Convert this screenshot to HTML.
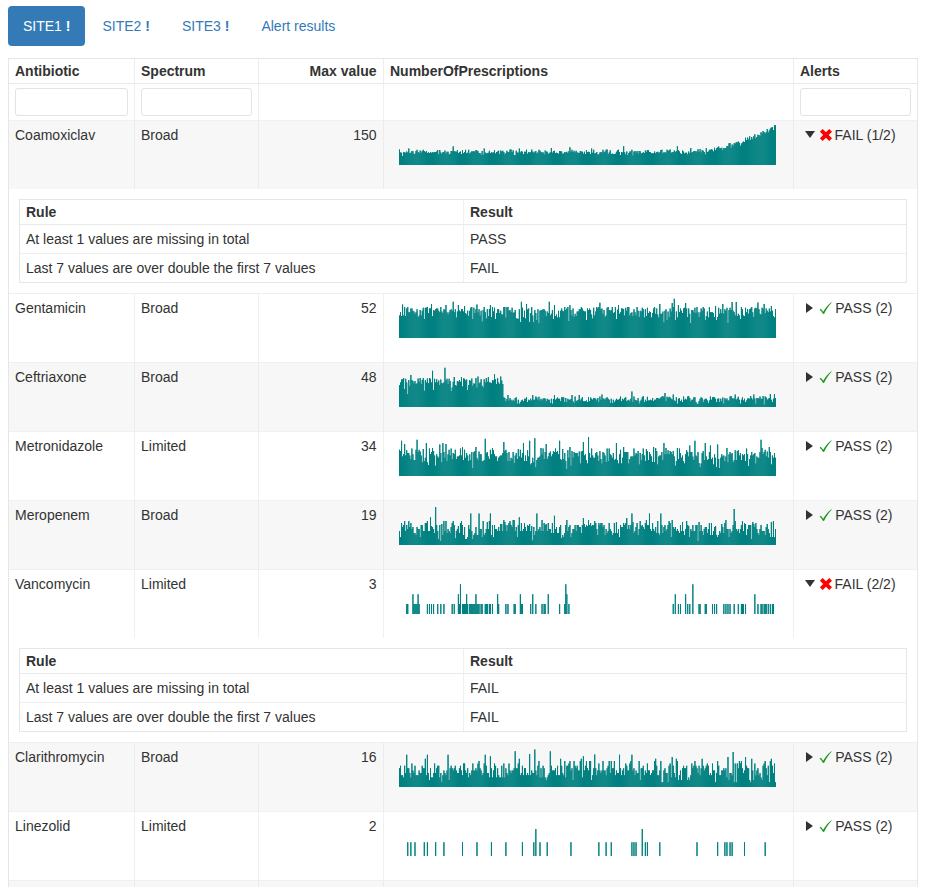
<!DOCTYPE html>
<html lang="en"><head><meta charset="utf-8"><title>mantis report</title>
<style>
*{box-sizing:border-box}
html,body{margin:0;padding:0;background:#fff}
body{width:925px;height:887px;overflow:hidden;position:relative;font-family:"Liberation Sans",Arial,Helvetica,sans-serif;font-size:14px;color:#333;line-height:16px}
ul.nav{list-style:none;margin:0;padding:0;position:absolute;left:8px;top:6px;display:flex}
ul.nav li{margin-right:2px}
ul.nav a{display:block;padding:10px 15px;line-height:20px;color:#337ab7;text-decoration:none;border-radius:4px;white-space:nowrap}
ul.nav li.active a{background:#337ab7;color:#fff}
ul.nav b{font-weight:bold}
.tbl{position:absolute;left:8px;top:58px;width:910px;border:1px solid #e6e6e6;border-bottom:0}
.tr{display:flex;position:relative}
.c{flex:0 0 auto;border-right:1px solid #efefef;padding:0 6px;overflow:hidden;white-space:nowrap;position:relative}
.c1{width:126px}.c2{width:124px}.c3{width:125px;text-align:right;padding-right:6.5px}.c4{width:410px}.c5{width:123px;border-right:0}
.hd .c{height:25px;padding-top:4px;font-weight:bold;border-bottom:1px solid #e9e9e9;border-right-color:#ededed}
.ft .c{height:36px;padding-top:4px}
.ft input{display:block;width:100%;height:28px;border:1px solid #e3e3e3;border-radius:3px;background:#fff;padding:0;margin:0}
.row .c{height:69px;border-top:1px solid #f0f0f0;padding-top:6px}
.row.s{background:#f7f7f7}
.row.s .c{border-right-color:#ebebeb;border-top-color:#f0f0f0}
.spark{position:absolute;left:14px;top:4px;display:block}
.exp{display:inline-block;width:0;height:0;vertical-align:top;margin:0}
.c5{padding-left:0}
.tri-d{position:absolute;left:11.4px;top:10px;width:0;height:0;border-left:5.04px solid transparent;border-right:5.04px solid transparent;border-top:7px solid rgba(0,0,0,.8)}
.tri-r{position:absolute;left:12.4px;top:8.8px;width:0;height:0;border-top:5.04px solid transparent;border-bottom:5.04px solid transparent;border-left:7px solid rgba(0,0,0,.8)}
.ic{position:absolute}.ic.x{left:25px;top:7px}.ic.k{left:25px;top:8px}
.lab{position:absolute;left:40.6px;top:6px}
.lab.p{left:41.2px}
.det{height:104px;padding:10px;background:#fff;border-top:0}
.in{border:1px solid #e6e6e6;width:888px}
.in .tr>div{flex:0 0 auto;padding:0 6px;white-space:nowrap}
.in .a{width:444px;border-right:1px solid #efefef}
.in .b{width:442px}
.in .h>div{height:25px;padding-top:4px;font-weight:bold;border-bottom:1px solid #e9e9e9}
.in .r>div{height:29px;padding-top:6px;border-bottom:1px solid #efefef}
.in .r.l>div{height:28px;border-bottom:0}
</style></head><body>
<ul class="nav"><li class="active"><a>SITE1 <b>!</b></a></li><li><a>SITE2 <b>!</b></a></li><li><a>SITE3 <b>!</b></a></li><li><a>Alert results</a></li></ul>
<div class="tbl">
<div class="tr hd"><div class="c c1">Antibiotic</div><div class="c c2">Spectrum</div><div class="c c3">Max value</div><div class="c c4">NumberOfPrescriptions</div><div class="c c5" style="padding-left:6px">Alerts</div></div>
<div class="tr ft"><div class="c c1"><input type="text"></div><div class="c c2"><input type="text"></div><div class="c c3"></div><div class="c c4"></div><div class="c c5" style="padding-left:6px"><input type="text"></div></div>
<div class="tr row s"><div class="c c1">Coamoxiclav</div><div class="c c2">Broad</div><div class="c c3">150</div><div class="c c4"><svg class="spark" width="380" height="41" viewBox="0 0 380 41" fill="#008080"><g><path d="M1.00 40V24.5h1V40zM4.10 40V30.9h1V40zM7.20 40V27.8h1V40zM10.30 40V23.4h1V40zM13.40 40V26.0h1V40zM16.49 40V28.7h1V40zM19.59 40V27.1h1V40zM22.69 40V27.5h1V40zM25.79 40V26.1h1V40zM28.89 40V28.0h1V40zM31.99 40V27.3h1V40zM35.09 40V27.6h1V40zM38.19 40V26.6h1V40zM41.29 40V25.1h1V40zM44.38 40V27.3h1V40zM47.48 40V28.6h1V40zM50.58 40V29.5h1V40zM53.68 40V26.0h1V40zM56.78 40V26.4h1V40zM59.88 40V28.2h1V40zM62.98 40V29.3h1V40zM66.08 40V27.1h1V40zM69.18 40V27.8h1V40zM72.27 40V27.6h1V40zM75.37 40V26.2h1V40zM78.47 40V25.5h1V40zM81.57 40V28.1h1V40zM84.67 40V29.7h1V40zM87.77 40V28.6h1V40zM90.87 40V25.8h1V40zM93.97 40V27.8h1V40zM97.07 40V28.4h1V40zM100.16 40V25.8h1V40zM103.26 40V26.4h1V40zM106.36 40V29.4h1V40zM109.46 40V27.0h1V40zM112.56 40V24.4h1V40zM115.66 40V29.9h1V40zM118.76 40V27.4h1V40zM121.86 40V27.4h1V40zM124.96 40V29.3h1V40zM128.05 40V24.7h1V40zM131.15 40V27.6h1V40zM134.25 40V26.5h1V40zM137.35 40V25.9h1V40zM140.45 40V24.8h1V40zM143.55 40V27.7h1V40zM146.65 40V25.6h1V40zM149.75 40V28.9h1V40zM152.85 40V23.0h1V40zM155.95 40V25.7h1V40zM159.04 40V28.3h1V40zM162.14 40V26.3h1V40zM165.24 40V28.5h1V40zM168.34 40V26.8h1V40zM171.44 40V22.3h1V40zM174.54 40V26.9h1V40zM177.64 40V25.7h1V40zM180.74 40V28.0h1V40zM183.84 40V26.7h1V40zM186.93 40V29.1h1V40zM190.03 40V26.7h1V40zM193.13 40V23.4h1V40zM196.23 40V28.6h1V40zM199.33 40V29.5h1V40zM202.43 40V27.1h1V40zM205.53 40V27.3h1V40zM208.63 40V24.5h1V40zM211.73 40V25.3h1V40zM214.82 40V28.9h1V40zM217.92 40V26.8h1V40zM221.02 40V27.0h1V40zM224.12 40V27.5h1V40zM227.22 40V29.6h1V40zM230.32 40V28.0h1V40zM233.42 40V24.7h1V40zM236.52 40V26.0h1V40zM239.62 40V28.6h1V40zM242.71 40V28.5h1V40zM245.81 40V28.0h1V40zM248.91 40V25.1h1V40zM252.01 40V27.3h1V40zM255.11 40V28.2h1V40zM258.21 40V26.9h1V40zM261.31 40V27.3h1V40zM264.41 40V28.2h1V40zM267.51 40V27.4h1V40zM270.60 40V25.2h1V40zM273.70 40V27.3h1V40zM276.80 40V27.2h1V40zM279.90 40V25.3h1V40zM283.00 40V29.3h1V40zM286.10 40V28.4h1V40zM289.20 40V29.5h1V40zM292.30 40V23.0h1V40zM295.40 40V26.0h1V40zM298.49 40V26.5h1V40zM301.59 40V23.9h1V40zM304.69 40V25.7h1V40zM307.79 40V23.2h1V40zM310.89 40V24.8h1V40zM313.99 40V24.8h1V40zM317.09 40V25.2h1V40zM320.19 40V21.5h1V40zM323.29 40V22.8h1V40zM326.38 40V23.2h1V40zM329.48 40V21.3h1V40zM332.58 40V22.7h1V40zM335.68 40V18.2h1V40zM338.78 40V17.6h1V40zM341.88 40V20.7h1V40zM344.98 40V16.6h1V40zM348.08 40V15.0h1V40zM351.18 40V11.2h1V40zM354.27 40V14.3h1V40zM357.37 40V13.5h1V40zM360.47 40V10.0h1V40zM363.57 40V8.3h1V40zM366.67 40V8.6h1V40zM369.77 40V7.5h1V40zM372.87 40V2.5h1V40zM375.97 40V0.3h1V40z"/><path d="M2.03 40V27.4h1V40zM5.13 40V27.0h1V40zM8.23 40V26.6h1V40zM11.33 40V28.3h1V40zM14.43 40V26.2h1V40zM17.53 40V25.9h1V40zM20.63 40V28.0h1V40zM23.73 40V26.0h1V40zM26.82 40V26.9h1V40zM29.92 40V27.3h1V40zM33.02 40V27.7h1V40zM36.12 40V26.9h1V40zM39.22 40V25.0h1V40zM42.32 40V27.4h1V40zM45.42 40V26.9h1V40zM48.52 40V26.7h1V40zM51.62 40V28.7h1V40zM54.71 40V21.2h1V40zM57.81 40V26.8h1V40zM60.91 40V27.2h1V40zM64.01 40V25.1h1V40zM67.11 40V24.7h1V40zM70.21 40V24.7h1V40zM73.31 40V26.3h1V40zM76.41 40V26.5h1V40zM79.51 40V26.2h1V40zM82.60 40V29.8h1V40zM85.70 40V23.4h1V40zM88.80 40V28.0h1V40zM91.90 40V28.3h1V40zM95.00 40V27.4h1V40zM98.10 40V26.9h1V40zM101.20 40V28.9h1V40zM104.30 40V25.7h1V40zM107.40 40V28.0h1V40zM110.49 40V27.1h1V40zM113.59 40V27.1h1V40zM116.69 40V30.0h1V40zM119.79 40V27.7h1V40zM122.89 40V26.0h1V40zM125.99 40V26.7h1V40zM129.09 40V28.7h1V40zM132.19 40V27.2h1V40zM135.29 40V27.7h1V40zM138.38 40V28.5h1V40zM141.48 40V25.8h1V40zM144.58 40V27.2h1V40zM147.68 40V26.5h1V40zM150.78 40V28.1h1V40zM153.88 40V27.7h1V40zM156.98 40V28.0h1V40zM160.08 40V28.7h1V40zM163.18 40V26.5h1V40zM166.27 40V27.1h1V40zM169.37 40V28.0h1V40zM172.47 40V26.8h1V40zM175.57 40V25.7h1V40zM178.67 40V27.6h1V40zM181.77 40V26.0h1V40zM184.87 40V28.7h1V40zM187.97 40V24.9h1V40zM191.07 40V27.2h1V40zM194.16 40V27.7h1V40zM197.26 40V28.0h1V40zM200.36 40V29.5h1V40zM203.46 40V27.6h1V40zM206.56 40V26.5h1V40zM209.66 40V29.3h1V40zM212.76 40V29.0h1V40zM215.86 40V29.0h1V40zM218.96 40V25.2h1V40zM222.05 40V29.9h1V40zM225.15 40V21.2h1V40zM228.25 40V26.4h1V40zM231.35 40V26.6h1V40zM234.45 40V30.5h1V40zM237.55 40V27.5h1V40zM240.65 40V26.1h1V40zM243.75 40V28.0h1V40zM246.85 40V25.5h1V40zM249.95 40V25.3h1V40zM253.04 40V28.4h1V40zM256.14 40V26.5h1V40zM259.24 40V26.7h1V40zM262.34 40V24.9h1V40zM265.44 40V27.3h1V40zM268.54 40V24.8h1V40zM271.64 40V24.4h1V40zM274.74 40V27.0h1V40zM277.84 40V26.1h1V40zM280.93 40V26.4h1V40zM284.03 40V25.4h1V40zM287.13 40V27.8h1V40zM290.23 40V26.6h1V40zM293.33 40V27.5h1V40zM296.43 40V26.1h1V40zM299.53 40V24.2h1V40zM302.63 40V27.5h1V40zM305.73 40V26.9h1V40zM308.82 40V27.0h1V40zM311.92 40V24.8h1V40zM315.02 40V26.5h1V40zM318.12 40V23.3h1V40zM321.22 40V23.3h1V40zM324.32 40V24.9h1V40zM327.42 40V23.1h1V40zM330.52 40V18.3h1V40zM333.62 40V19.5h1V40zM336.71 40V18.5h1V40zM339.81 40V16.6h1V40zM342.91 40V18.4h1V40zM346.01 40V17.0h1V40zM349.11 40V12.5h1V40zM352.21 40V14.9h1V40zM355.31 40V11.3h1V40zM358.41 40V11.9h1V40zM361.51 40V11.3h1V40zM364.60 40V6.0h1V40zM367.70 40V7.2h1V40zM370.80 40V5.6h1V40zM373.90 40V2.2h1V40zM377.00 40V0.3h1V40z"/><path d="M3.07 40V27.7h1V40zM6.16 40V27.5h1V40zM9.26 40V27.4h1V40zM12.36 40V27.7h1V40zM15.46 40V28.9h1V40zM18.56 40V24.7h1V40zM21.66 40V25.4h1V40zM24.76 40V24.8h1V40zM27.86 40V26.0h1V40zM30.96 40V27.9h1V40zM34.05 40V27.3h1V40zM37.15 40V26.9h1V40zM40.25 40V29.3h1V40zM43.35 40V28.8h1V40zM46.45 40V25.5h1V40zM49.55 40V26.8h1V40zM52.65 40V26.1h1V40zM55.75 40V26.2h1V40zM58.85 40V25.3h1V40zM61.95 40V26.5h1V40zM65.04 40V28.2h1V40zM68.14 40V28.2h1V40zM71.24 40V28.6h1V40zM74.34 40V26.4h1V40zM77.44 40V25.1h1V40zM80.54 40V28.0h1V40zM83.64 40V26.0h1V40zM86.74 40V27.4h1V40zM89.84 40V27.7h1V40zM92.93 40V27.2h1V40zM96.03 40V25.1h1V40zM99.13 40V26.6h1V40zM102.23 40V25.4h1V40zM105.33 40V26.9h1V40zM108.43 40V25.8h1V40zM111.53 40V24.4h1V40zM114.63 40V25.2h1V40zM117.73 40V25.8h1V40zM120.82 40V23.4h1V40zM123.92 40V26.8h1V40zM127.02 40V26.7h1V40zM130.12 40V27.0h1V40zM133.22 40V24.6h1V40zM136.32 40V26.8h1V40zM139.42 40V27.4h1V40zM142.52 40V27.1h1V40zM145.62 40V29.3h1V40zM148.71 40V26.8h1V40zM151.81 40V27.3h1V40zM154.91 40V26.3h1V40zM158.01 40V27.8h1V40zM161.11 40V25.9h1V40zM164.21 40V28.7h1V40zM167.31 40V27.6h1V40zM170.41 40V26.3h1V40zM173.51 40V24.7h1V40zM176.60 40V27.6h1V40zM179.70 40V27.7h1V40zM182.80 40V26.6h1V40zM185.90 40V26.8h1V40zM189.00 40V27.2h1V40zM192.10 40V29.3h1V40zM195.20 40V24.8h1V40zM198.30 40V27.1h1V40zM201.40 40V27.6h1V40zM204.49 40V24.8h1V40zM207.59 40V24.7h1V40zM210.69 40V27.6h1V40zM213.79 40V28.4h1V40zM216.89 40V28.7h1V40zM219.99 40V24.8h1V40zM223.09 40V27.1h1V40zM226.19 40V27.2h1V40zM229.29 40V30.0h1V40zM232.38 40V26.5h1V40zM235.48 40V26.5h1V40zM238.58 40V26.1h1V40zM241.68 40V26.2h1V40zM244.78 40V27.3h1V40zM247.88 40V26.8h1V40zM250.98 40V26.9h1V40zM254.08 40V28.2h1V40zM257.18 40V28.3h1V40zM260.27 40V27.7h1V40zM263.37 40V24.7h1V40zM266.47 40V27.6h1V40zM269.57 40V26.0h1V40zM272.67 40V27.7h1V40zM275.77 40V25.5h1V40zM278.87 40V21.2h1V40zM281.97 40V28.2h1V40zM285.07 40V26.4h1V40zM288.16 40V27.7h1V40zM291.26 40V28.1h1V40zM294.36 40V27.0h1V40zM297.46 40V26.6h1V40zM300.56 40V26.7h1V40zM303.66 40V25.0h1V40zM306.76 40V29.5h1V40zM309.86 40V26.6h1V40zM312.96 40V24.3h1V40zM316.05 40V22.8h1V40zM319.15 40V22.6h1V40zM322.25 40V23.2h1V40zM325.35 40V23.1h1V40zM328.45 40V20.9h1V40zM331.55 40V18.1h1V40zM334.65 40V20.8h1V40zM337.75 40V17.0h1V40zM340.85 40V17.8h1V40zM343.95 40V17.6h1V40zM347.04 40V12.8h1V40zM350.14 40V14.5h1V40zM353.24 40V11.9h1V40zM356.34 40V9.2h1V40zM359.44 40V9.8h1V40zM362.54 40V7.2h1V40zM365.64 40V7.0h1V40zM368.74 40V4.0h1V40zM371.84 40V3.6h1V40zM374.93 40V5.1h1V40z"/></g><g><path d="M1.00 40V24.5h1V40zM4.10 40V30.9h1V40zM7.20 40V27.8h1V40zM10.30 40V23.4h1V40zM13.40 40V26.0h1V40zM16.49 40V28.7h1V40zM19.59 40V27.1h1V40zM22.69 40V27.5h1V40zM25.79 40V26.1h1V40zM28.89 40V28.0h1V40zM31.99 40V27.3h1V40zM35.09 40V27.6h1V40zM38.19 40V26.6h1V40zM41.29 40V25.1h1V40zM44.38 40V27.3h1V40zM47.48 40V28.6h1V40zM50.58 40V29.5h1V40zM53.68 40V26.0h1V40zM56.78 40V26.4h1V40zM59.88 40V28.2h1V40zM62.98 40V29.3h1V40zM66.08 40V27.1h1V40zM69.18 40V27.8h1V40zM72.27 40V27.6h1V40zM75.37 40V26.2h1V40zM78.47 40V25.5h1V40zM81.57 40V28.1h1V40zM84.67 40V29.7h1V40zM87.77 40V28.6h1V40zM90.87 40V25.8h1V40zM93.97 40V27.8h1V40zM97.07 40V28.4h1V40zM100.16 40V25.8h1V40zM103.26 40V26.4h1V40zM106.36 40V29.4h1V40zM109.46 40V27.0h1V40zM112.56 40V24.4h1V40zM115.66 40V29.9h1V40zM118.76 40V27.4h1V40zM121.86 40V27.4h1V40zM124.96 40V29.3h1V40zM128.05 40V24.7h1V40zM131.15 40V27.6h1V40zM134.25 40V26.5h1V40zM137.35 40V25.9h1V40zM140.45 40V24.8h1V40zM143.55 40V27.7h1V40zM146.65 40V25.6h1V40zM149.75 40V28.9h1V40zM152.85 40V23.0h1V40zM155.95 40V25.7h1V40zM159.04 40V28.3h1V40zM162.14 40V26.3h1V40zM165.24 40V28.5h1V40zM168.34 40V26.8h1V40zM171.44 40V22.3h1V40zM174.54 40V26.9h1V40zM177.64 40V25.7h1V40zM180.74 40V28.0h1V40zM183.84 40V26.7h1V40zM186.93 40V29.1h1V40zM190.03 40V26.7h1V40zM193.13 40V23.4h1V40zM196.23 40V28.6h1V40zM199.33 40V29.5h1V40zM202.43 40V27.1h1V40zM205.53 40V27.3h1V40zM208.63 40V24.5h1V40zM211.73 40V25.3h1V40zM214.82 40V28.9h1V40zM217.92 40V26.8h1V40zM221.02 40V27.0h1V40zM224.12 40V27.5h1V40zM227.22 40V29.6h1V40zM230.32 40V28.0h1V40zM233.42 40V24.7h1V40zM236.52 40V26.0h1V40zM239.62 40V28.6h1V40zM242.71 40V28.5h1V40zM245.81 40V28.0h1V40zM248.91 40V25.1h1V40zM252.01 40V27.3h1V40zM255.11 40V28.2h1V40zM258.21 40V26.9h1V40zM261.31 40V27.3h1V40zM264.41 40V28.2h1V40zM267.51 40V27.4h1V40zM270.60 40V25.2h1V40zM273.70 40V27.3h1V40zM276.80 40V27.2h1V40zM279.90 40V25.3h1V40zM283.00 40V29.3h1V40zM286.10 40V28.4h1V40zM289.20 40V29.5h1V40zM292.30 40V23.0h1V40zM295.40 40V26.0h1V40zM298.49 40V26.5h1V40zM301.59 40V23.9h1V40zM304.69 40V25.7h1V40zM307.79 40V23.2h1V40zM310.89 40V24.8h1V40zM313.99 40V24.8h1V40zM317.09 40V25.2h1V40zM320.19 40V21.5h1V40zM323.29 40V22.8h1V40zM326.38 40V23.2h1V40zM329.48 40V21.3h1V40zM332.58 40V22.7h1V40zM335.68 40V18.2h1V40zM338.78 40V17.6h1V40zM341.88 40V20.7h1V40zM344.98 40V16.6h1V40zM348.08 40V15.0h1V40zM351.18 40V11.2h1V40zM354.27 40V14.3h1V40zM357.37 40V13.5h1V40zM360.47 40V10.0h1V40zM363.57 40V8.3h1V40zM366.67 40V8.6h1V40zM369.77 40V7.5h1V40zM372.87 40V2.5h1V40zM375.97 40V0.3h1V40z"/><path d="M2.03 40V27.4h1V40zM5.13 40V27.0h1V40zM8.23 40V26.6h1V40zM11.33 40V28.3h1V40zM14.43 40V26.2h1V40zM17.53 40V25.9h1V40zM20.63 40V28.0h1V40zM23.73 40V26.0h1V40zM26.82 40V26.9h1V40zM29.92 40V27.3h1V40zM33.02 40V27.7h1V40zM36.12 40V26.9h1V40zM39.22 40V25.0h1V40zM42.32 40V27.4h1V40zM45.42 40V26.9h1V40zM48.52 40V26.7h1V40zM51.62 40V28.7h1V40zM54.71 40V21.2h1V40zM57.81 40V26.8h1V40zM60.91 40V27.2h1V40zM64.01 40V25.1h1V40zM67.11 40V24.7h1V40zM70.21 40V24.7h1V40zM73.31 40V26.3h1V40zM76.41 40V26.5h1V40zM79.51 40V26.2h1V40zM82.60 40V29.8h1V40zM85.70 40V23.4h1V40zM88.80 40V28.0h1V40zM91.90 40V28.3h1V40zM95.00 40V27.4h1V40zM98.10 40V26.9h1V40zM101.20 40V28.9h1V40zM104.30 40V25.7h1V40zM107.40 40V28.0h1V40zM110.49 40V27.1h1V40zM113.59 40V27.1h1V40zM116.69 40V30.0h1V40zM119.79 40V27.7h1V40zM122.89 40V26.0h1V40zM125.99 40V26.7h1V40zM129.09 40V28.7h1V40zM132.19 40V27.2h1V40zM135.29 40V27.7h1V40zM138.38 40V28.5h1V40zM141.48 40V25.8h1V40zM144.58 40V27.2h1V40zM147.68 40V26.5h1V40zM150.78 40V28.1h1V40zM153.88 40V27.7h1V40zM156.98 40V28.0h1V40zM160.08 40V28.7h1V40zM163.18 40V26.5h1V40zM166.27 40V27.1h1V40zM169.37 40V28.0h1V40zM172.47 40V26.8h1V40zM175.57 40V25.7h1V40zM178.67 40V27.6h1V40zM181.77 40V26.0h1V40zM184.87 40V28.7h1V40zM187.97 40V24.9h1V40zM191.07 40V27.2h1V40zM194.16 40V27.7h1V40zM197.26 40V28.0h1V40zM200.36 40V29.5h1V40zM203.46 40V27.6h1V40zM206.56 40V26.5h1V40zM209.66 40V29.3h1V40zM212.76 40V29.0h1V40zM215.86 40V29.0h1V40zM218.96 40V25.2h1V40zM222.05 40V29.9h1V40zM225.15 40V21.2h1V40zM228.25 40V26.4h1V40zM231.35 40V26.6h1V40zM234.45 40V30.5h1V40zM237.55 40V27.5h1V40zM240.65 40V26.1h1V40zM243.75 40V28.0h1V40zM246.85 40V25.5h1V40zM249.95 40V25.3h1V40zM253.04 40V28.4h1V40zM256.14 40V26.5h1V40zM259.24 40V26.7h1V40zM262.34 40V24.9h1V40zM265.44 40V27.3h1V40zM268.54 40V24.8h1V40zM271.64 40V24.4h1V40zM274.74 40V27.0h1V40zM277.84 40V26.1h1V40zM280.93 40V26.4h1V40zM284.03 40V25.4h1V40zM287.13 40V27.8h1V40zM290.23 40V26.6h1V40zM293.33 40V27.5h1V40zM296.43 40V26.1h1V40zM299.53 40V24.2h1V40zM302.63 40V27.5h1V40zM305.73 40V26.9h1V40zM308.82 40V27.0h1V40zM311.92 40V24.8h1V40zM315.02 40V26.5h1V40zM318.12 40V23.3h1V40zM321.22 40V23.3h1V40zM324.32 40V24.9h1V40zM327.42 40V23.1h1V40zM330.52 40V18.3h1V40zM333.62 40V19.5h1V40zM336.71 40V18.5h1V40zM339.81 40V16.6h1V40zM342.91 40V18.4h1V40zM346.01 40V17.0h1V40zM349.11 40V12.5h1V40zM352.21 40V14.9h1V40zM355.31 40V11.3h1V40zM358.41 40V11.9h1V40zM361.51 40V11.3h1V40zM364.60 40V6.0h1V40zM367.70 40V7.2h1V40zM370.80 40V5.6h1V40zM373.90 40V2.2h1V40zM377.00 40V0.3h1V40z"/><path d="M3.07 40V27.7h1V40zM6.16 40V27.5h1V40zM9.26 40V27.4h1V40zM12.36 40V27.7h1V40zM15.46 40V28.9h1V40zM18.56 40V24.7h1V40zM21.66 40V25.4h1V40zM24.76 40V24.8h1V40zM27.86 40V26.0h1V40zM30.96 40V27.9h1V40zM34.05 40V27.3h1V40zM37.15 40V26.9h1V40zM40.25 40V29.3h1V40zM43.35 40V28.8h1V40zM46.45 40V25.5h1V40zM49.55 40V26.8h1V40zM52.65 40V26.1h1V40zM55.75 40V26.2h1V40zM58.85 40V25.3h1V40zM61.95 40V26.5h1V40zM65.04 40V28.2h1V40zM68.14 40V28.2h1V40zM71.24 40V28.6h1V40zM74.34 40V26.4h1V40zM77.44 40V25.1h1V40zM80.54 40V28.0h1V40zM83.64 40V26.0h1V40zM86.74 40V27.4h1V40zM89.84 40V27.7h1V40zM92.93 40V27.2h1V40zM96.03 40V25.1h1V40zM99.13 40V26.6h1V40zM102.23 40V25.4h1V40zM105.33 40V26.9h1V40zM108.43 40V25.8h1V40zM111.53 40V24.4h1V40zM114.63 40V25.2h1V40zM117.73 40V25.8h1V40zM120.82 40V23.4h1V40zM123.92 40V26.8h1V40zM127.02 40V26.7h1V40zM130.12 40V27.0h1V40zM133.22 40V24.6h1V40zM136.32 40V26.8h1V40zM139.42 40V27.4h1V40zM142.52 40V27.1h1V40zM145.62 40V29.3h1V40zM148.71 40V26.8h1V40zM151.81 40V27.3h1V40zM154.91 40V26.3h1V40zM158.01 40V27.8h1V40zM161.11 40V25.9h1V40zM164.21 40V28.7h1V40zM167.31 40V27.6h1V40zM170.41 40V26.3h1V40zM173.51 40V24.7h1V40zM176.60 40V27.6h1V40zM179.70 40V27.7h1V40zM182.80 40V26.6h1V40zM185.90 40V26.8h1V40zM189.00 40V27.2h1V40zM192.10 40V29.3h1V40zM195.20 40V24.8h1V40zM198.30 40V27.1h1V40zM201.40 40V27.6h1V40zM204.49 40V24.8h1V40zM207.59 40V24.7h1V40zM210.69 40V27.6h1V40zM213.79 40V28.4h1V40zM216.89 40V28.7h1V40zM219.99 40V24.8h1V40zM223.09 40V27.1h1V40zM226.19 40V27.2h1V40zM229.29 40V30.0h1V40zM232.38 40V26.5h1V40zM235.48 40V26.5h1V40zM238.58 40V26.1h1V40zM241.68 40V26.2h1V40zM244.78 40V27.3h1V40zM247.88 40V26.8h1V40zM250.98 40V26.9h1V40zM254.08 40V28.2h1V40zM257.18 40V28.3h1V40zM260.27 40V27.7h1V40zM263.37 40V24.7h1V40zM266.47 40V27.6h1V40zM269.57 40V26.0h1V40zM272.67 40V27.7h1V40zM275.77 40V25.5h1V40zM278.87 40V21.2h1V40zM281.97 40V28.2h1V40zM285.07 40V26.4h1V40zM288.16 40V27.7h1V40zM291.26 40V28.1h1V40zM294.36 40V27.0h1V40zM297.46 40V26.6h1V40zM300.56 40V26.7h1V40zM303.66 40V25.0h1V40zM306.76 40V29.5h1V40zM309.86 40V26.6h1V40zM312.96 40V24.3h1V40zM316.05 40V22.8h1V40zM319.15 40V22.6h1V40zM322.25 40V23.2h1V40zM325.35 40V23.1h1V40zM328.45 40V20.9h1V40zM331.55 40V18.1h1V40zM334.65 40V20.8h1V40zM337.75 40V17.0h1V40zM340.85 40V17.8h1V40zM343.95 40V17.6h1V40zM347.04 40V12.8h1V40zM350.14 40V14.5h1V40zM353.24 40V11.9h1V40zM356.34 40V9.2h1V40zM359.44 40V9.8h1V40zM362.54 40V7.2h1V40zM365.64 40V7.0h1V40zM368.74 40V4.0h1V40zM371.84 40V3.6h1V40zM374.93 40V5.1h1V40z"/></g></svg></div><div class="c c5"><span class="tri-d"></span><svg class="ic x" width="14" height="14" viewBox="0 0 14 14"><path fill="#f00" transform="translate(.45 .47)" d="M.45 3.2 3.2 .45 6.5 3.75 9.8 .45 12.55 3.2 9.25 6.5 12.55 9.8 9.8 12.55 6.5 9.25 3.2 12.55 .45 9.8 3.75 6.5z"/></svg><span class="lab">FAIL (1/2)</span></div></div>
<div class="det"><div class="in"><div class="tr h"><div class="a">Rule</div><div class="b">Result</div></div><div class="tr r"><div class="a">At least 1 values are missing in total</div><div class="b">PASS</div></div><div class="tr r l"><div class="a">Last 7 values are over double the first 7 values</div><div class="b">FAIL</div></div></div></div>
<div class="tr row"><div class="c c1">Gentamicin</div><div class="c c2">Broad</div><div class="c c3">52</div><div class="c c4"><svg class="spark" width="380" height="41" viewBox="0 0 380 41" fill="#008080"><g><path d="M1.00 40V17.4h1V40zM4.10 40V6.5h1V40zM7.20 40V18.1h1V40zM10.30 40V14.3h1V40zM13.40 40V10.6h1V40zM16.49 40V15.8h1V40zM19.59 40V18.9h1V40zM22.69 40V17.4h1V40zM25.79 40V21.0h1V40zM28.89 40V9.0h1V40zM31.99 40V10.6h1V40zM35.09 40V12.1h1V40zM38.19 40V10.5h1V40zM41.29 40V14.3h1V40zM44.38 40V15.1h1V40zM47.48 40V7.0h1V40zM50.58 40V14.3h1V40zM53.68 40V12.8h1V40zM56.78 40V11.3h1V40zM59.88 40V7.0h1V40zM62.98 40V11.3h1V40zM66.08 40V8.0h1V40zM69.18 40V12.8h1V40zM72.27 40V9.8h1V40zM75.37 40V9.8h1V40zM78.47 40V6.5h1V40zM81.57 40V17.4h1V40zM84.67 40V12.1h1V40zM87.77 40V20.4h1V40zM90.87 40V11.0h1V40zM93.97 40V9.0h1V40zM97.07 40V21.1h1V40zM100.16 40V11.3h1V40zM103.26 40V16.6h1V40zM106.36 40V9.1h1V40zM109.46 40V9.0h1V40zM112.56 40V14.3h1V40zM115.66 40V14.3h1V40zM118.76 40V20.4h1V40zM121.86 40V24.0h1V40zM124.96 40V18.9h1V40zM128.05 40V6.0h1V40zM131.15 40V24.0h1V40zM134.25 40V17.4h1V40zM137.35 40V15.1h1V40zM140.45 40V25.0h1V40zM143.55 40V12.1h1V40zM146.65 40V12.8h1V40zM149.75 40V15.1h1V40zM152.85 40V15.8h1V40zM155.95 40V7.0h1V40zM159.04 40V19.6h1V40zM162.14 40V12.8h1V40zM165.24 40V13.6h1V40zM168.34 40V10.5h1V40zM171.44 40V7.3h1V40zM174.54 40V10.6h1V40zM177.64 40V18.1h1V40zM180.74 40V11.3h1V40zM183.84 40V10.5h1V40zM186.93 40V13.6h1V40zM190.03 40V12.1h1V40zM193.13 40V16.6h1V40zM196.23 40V17.4h1V40zM199.33 40V10.5h1V40zM202.43 40V11.3h1V40zM205.53 40V12.1h1V40zM208.63 40V9.8h1V40zM211.73 40V12.8h1V40zM214.82 40V15.1h1V40zM217.92 40V21.1h1V40zM221.02 40V15.8h1V40zM224.12 40V10.6h1V40zM227.22 40V9.8h1V40zM230.32 40V9.1h1V40zM233.42 40V14.3h1V40zM236.52 40V14.3h1V40zM239.62 40V12.8h1V40zM242.71 40V13.6h1V40zM245.81 40V19.6h1V40zM248.91 40V9.8h1V40zM252.01 40V14.3h1V40zM255.11 40V10.6h1V40zM258.21 40V10.6h1V40zM261.31 40V6.0h1V40zM264.41 40V13.6h1V40zM267.51 40V11.3h1V40zM270.60 40V18.9h1V40zM273.70 40V5.0h1V40zM276.80 40V21.9h1V40zM279.90 40V7.0h1V40zM283.00 40V12.8h1V40zM286.10 40V9.8h1V40zM289.20 40V18.9h1V40zM292.30 40V25.0h1V40zM295.40 40V14.3h1V40zM298.49 40V9.0h1V40zM301.59 40V14.3h1V40zM304.69 40V9.1h1V40zM307.79 40V18.1h1V40zM310.89 40V9.0h1V40zM313.99 40V14.3h1V40zM317.09 40V8.0h1V40zM320.19 40V9.8h1V40zM323.29 40V15.1h1V40zM326.38 40V11.3h1V40zM329.48 40V25.0h1V40zM332.58 40V12.1h1V40zM335.68 40V14.3h1V40zM338.78 40V18.1h1V40zM341.88 40V21.1h1V40zM344.98 40V17.4h1V40zM348.08 40V14.3h1V40zM351.18 40V11.3h1V40zM354.27 40V14.3h1V40zM357.37 40V9.8h1V40zM360.47 40V11.3h1V40zM363.57 40V9.8h1V40zM366.67 40V15.1h1V40zM369.77 40V14.3h1V40zM372.87 40V8.0h1V40zM375.97 40V19.6h1V40z"/><path d="M2.03 40V14.3h1V40zM5.13 40V17.4h1V40zM8.23 40V10.6h1V40zM11.33 40V14.3h1V40zM14.43 40V12.8h1V40zM17.53 40V14.3h1V40zM20.63 40V17.4h1V40zM23.73 40V12.8h1V40zM26.82 40V9.8h1V40zM29.92 40V15.1h1V40zM33.02 40V6.0h1V40zM36.12 40V12.8h1V40zM39.22 40V10.6h1V40zM42.32 40V9.1h1V40zM45.42 40V11.3h1V40zM48.52 40V14.3h1V40zM51.62 40V12.1h1V40zM54.71 40V3.7h1V40zM57.81 40V19.6h1V40zM60.91 40V12.5h1V40zM64.01 40V11.3h1V40zM67.11 40V15.1h1V40zM70.21 40V18.1h1V40zM73.31 40V9.1h1V40zM76.41 40V15.1h1V40zM79.51 40V14.3h1V40zM82.60 40V12.8h1V40zM85.70 40V9.1h1V40zM88.80 40V11.3h1V40zM91.90 40V7.0h1V40zM95.00 40V13.6h1V40zM98.10 40V15.1h1V40zM101.20 40V15.1h1V40zM104.30 40V16.6h1V40zM107.40 40V19.6h1V40zM110.49 40V12.8h1V40zM113.59 40V9.8h1V40zM116.69 40V12.1h1V40zM119.79 40V21.1h1V40zM122.89 40V3.7h1V40zM125.99 40V12.8h1V40zM129.09 40V11.5h1V40zM132.19 40V15.1h1V40zM135.29 40V24.2h1V40zM138.38 40V21.9h1V40zM141.48 40V12.8h1V40zM144.58 40V11.3h1V40zM147.68 40V18.1h1V40zM150.78 40V3.7h1V40zM153.88 40V12.1h1V40zM156.98 40V18.1h1V40zM160.08 40V12.8h1V40zM163.18 40V10.5h1V40zM166.27 40V9.0h1V40zM169.37 40V9.1h1V40zM172.47 40V12.1h1V40zM175.57 40V18.9h1V40zM178.67 40V13.6h1V40zM181.77 40V11.3h1V40zM184.87 40V12.8h1V40zM187.97 40V21.9h1V40zM191.07 40V10.6h1V40zM194.16 40V20.4h1V40zM197.26 40V13.6h1V40zM200.36 40V9.0h1V40zM203.46 40V10.6h1V40zM206.56 40V18.9h1V40zM209.66 40V9.0h1V40zM212.76 40V12.1h1V40zM215.86 40V14.3h1V40zM218.96 40V11.8h1V40zM222.05 40V14.3h1V40zM225.15 40V11.3h1V40zM228.25 40V12.8h1V40zM231.35 40V17.4h1V40zM234.45 40V18.1h1V40zM237.55 40V17.4h1V40zM240.65 40V18.9h1V40zM243.75 40V9.8h1V40zM246.85 40V11.3h1V40zM249.95 40V15.1h1V40zM253.04 40V19.6h1V40zM256.14 40V9.1h1V40zM259.24 40V16.6h1V40zM262.34 40V15.8h1V40zM265.44 40V24.2h1V40zM268.54 40V21.9h1V40zM271.64 40V10.5h1V40zM274.74 40V9.0h1V40zM277.84 40V13.6h1V40zM280.93 40V14.3h1V40zM284.03 40V15.1h1V40zM287.13 40V5.0h1V40zM290.23 40V10.6h1V40zM293.33 40V12.1h1V40zM296.43 40V9.8h1V40zM299.53 40V14.3h1V40zM302.63 40V10.6h1V40zM305.73 40V10.5h1V40zM308.82 40V13.6h1V40zM311.92 40V14.3h1V40zM315.02 40V15.1h1V40zM318.12 40V22.0h1V40zM321.22 40V15.8h1V40zM324.32 40V6.0h1V40zM327.42 40V12.8h1V40zM330.52 40V12.1h1V40zM333.62 40V4.0h1V40zM336.71 40V17.4h1V40zM339.81 40V15.8h1V40zM342.91 40V9.1h1V40zM346.01 40V18.1h1V40zM349.11 40V11.3h1V40zM352.21 40V10.5h1V40zM355.31 40V18.9h1V40zM358.41 40V10.5h1V40zM361.51 40V15.8h1V40zM364.60 40V10.8h1V40zM367.70 40V10.6h1V40zM370.80 40V10.6h1V40zM373.90 40V12.8h1V40zM377.00 40V11.3h1V40z"/><path d="M3.07 40V18.1h1V40zM6.16 40V9.0h1V40zM9.26 40V9.1h1V40zM12.36 40V10.6h1V40zM15.46 40V13.6h1V40zM18.56 40V11.3h1V40zM21.66 40V12.1h1V40zM24.76 40V9.8h1V40zM27.86 40V9.8h1V40zM30.96 40V10.5h1V40zM34.05 40V18.1h1V40zM37.15 40V11.3h1V40zM40.25 40V12.8h1V40zM43.35 40V13.6h1V40zM46.45 40V11.8h1V40zM49.55 40V16.6h1V40zM52.65 40V11.3h1V40zM55.75 40V14.3h1V40zM58.85 40V13.6h1V40zM61.95 40V13.6h1V40zM65.04 40V13.6h1V40zM68.14 40V16.6h1V40zM71.24 40V12.8h1V40zM74.34 40V21.0h1V40zM77.44 40V11.3h1V40zM80.54 40V11.3h1V40zM83.64 40V23.4h1V40zM86.74 40V14.3h1V40zM89.84 40V18.1h1V40zM92.93 40V18.9h1V40zM96.03 40V9.8h1V40zM99.13 40V11.3h1V40zM102.23 40V12.8h1V40zM105.33 40V9.1h1V40zM108.43 40V9.0h1V40zM111.53 40V12.1h1V40zM114.63 40V15.1h1V40zM117.73 40V20.4h1V40zM120.82 40V11.3h1V40zM123.92 40V9.8h1V40zM127.02 40V20.4h1V40zM130.12 40V10.6h1V40zM133.22 40V9.1h1V40zM136.32 40V12.1h1V40zM139.42 40V11.3h1V40zM142.52 40V12.1h1V40zM145.62 40V11.3h1V40zM148.71 40V13.6h1V40zM151.81 40V17.4h1V40zM154.91 40V21.1h1V40zM158.01 40V16.6h1V40zM161.11 40V19.6h1V40zM164.21 40V12.8h1V40zM167.31 40V12.1h1V40zM170.41 40V23.0h1V40zM173.51 40V17.4h1V40zM176.60 40V15.8h1V40zM179.70 40V13.6h1V40zM182.80 40V9.1h1V40zM185.90 40V13.6h1V40zM189.00 40V10.5h1V40zM192.10 40V12.1h1V40zM195.20 40V9.8h1V40zM198.30 40V9.1h1V40zM201.40 40V4.8h1V40zM204.49 40V15.8h1V40zM207.59 40V17.4h1V40zM210.69 40V12.1h1V40zM213.79 40V9.1h1V40zM216.89 40V9.0h1V40zM219.99 40V7.0h1V40zM223.09 40V10.5h1V40zM226.19 40V17.4h1V40zM229.29 40V9.1h1V40zM232.38 40V15.1h1V40zM235.48 40V11.3h1V40zM238.58 40V9.1h1V40zM241.68 40V12.8h1V40zM244.78 40V11.3h1V40zM247.88 40V18.1h1V40zM250.98 40V13.6h1V40zM254.08 40V15.1h1V40zM257.18 40V15.8h1V40zM260.27 40V19.6h1V40zM263.37 40V15.8h1V40zM266.47 40V12.8h1V40zM269.57 40V13.6h1V40zM272.67 40V13.6h1V40zM275.77 40V0.7h1V40zM278.87 40V19.6h1V40zM281.97 40V10.5h1V40zM285.07 40V10.6h1V40zM288.16 40V10.6h1V40zM291.26 40V15.8h1V40zM294.36 40V12.1h1V40zM297.46 40V15.1h1V40zM300.56 40V18.9h1V40zM303.66 40V12.8h1V40zM306.76 40V21.9h1V40zM309.86 40V19.6h1V40zM312.96 40V14.3h1V40zM316.05 40V18.9h1V40zM319.15 40V18.9h1V40zM322.25 40V11.3h1V40zM325.35 40V15.8h1V40zM328.45 40V9.8h1V40zM331.55 40V9.8h1V40zM334.65 40V12.8h1V40zM337.75 40V4.0h1V40zM340.85 40V17.4h1V40zM343.95 40V11.3h1V40zM347.04 40V9.8h1V40zM350.14 40V15.8h1V40zM353.24 40V9.0h1V40zM356.34 40V10.5h1V40zM359.44 40V4.4h1V40zM362.54 40V16.6h1V40zM365.64 40V6.0h1V40zM368.74 40V12.8h1V40zM371.84 40V13.5h1V40zM374.93 40V18.1h1V40z"/></g><g><path d="M1.00 40V17.4h1V40zM4.10 40V6.5h1V40zM7.20 40V18.1h1V40zM10.30 40V14.3h1V40zM13.40 40V10.6h1V40zM16.49 40V15.8h1V40zM19.59 40V18.9h1V40zM22.69 40V17.4h1V40zM25.79 40V21.0h1V40zM28.89 40V9.0h1V40zM31.99 40V10.6h1V40zM35.09 40V12.1h1V40zM38.19 40V10.5h1V40zM41.29 40V14.3h1V40zM44.38 40V15.1h1V40zM47.48 40V7.0h1V40zM50.58 40V14.3h1V40zM53.68 40V12.8h1V40zM56.78 40V11.3h1V40zM59.88 40V7.0h1V40zM62.98 40V11.3h1V40zM66.08 40V8.0h1V40zM69.18 40V12.8h1V40zM72.27 40V9.8h1V40zM75.37 40V9.8h1V40zM78.47 40V6.5h1V40zM81.57 40V17.4h1V40zM84.67 40V12.1h1V40zM87.77 40V20.4h1V40zM90.87 40V11.0h1V40zM93.97 40V9.0h1V40zM97.07 40V21.1h1V40zM100.16 40V11.3h1V40zM103.26 40V16.6h1V40zM106.36 40V9.1h1V40zM109.46 40V9.0h1V40zM112.56 40V14.3h1V40zM115.66 40V14.3h1V40zM118.76 40V20.4h1V40zM121.86 40V24.0h1V40zM124.96 40V18.9h1V40zM128.05 40V6.0h1V40zM131.15 40V24.0h1V40zM134.25 40V17.4h1V40zM137.35 40V15.1h1V40zM140.45 40V25.0h1V40zM143.55 40V12.1h1V40zM146.65 40V12.8h1V40zM149.75 40V15.1h1V40zM152.85 40V15.8h1V40zM155.95 40V7.0h1V40zM159.04 40V19.6h1V40zM162.14 40V12.8h1V40zM165.24 40V13.6h1V40zM168.34 40V10.5h1V40zM171.44 40V7.3h1V40zM174.54 40V10.6h1V40zM177.64 40V18.1h1V40zM180.74 40V11.3h1V40zM183.84 40V10.5h1V40zM186.93 40V13.6h1V40zM190.03 40V12.1h1V40zM193.13 40V16.6h1V40zM196.23 40V17.4h1V40zM199.33 40V10.5h1V40zM202.43 40V11.3h1V40zM205.53 40V12.1h1V40zM208.63 40V9.8h1V40zM211.73 40V12.8h1V40zM214.82 40V15.1h1V40zM217.92 40V21.1h1V40zM221.02 40V15.8h1V40zM224.12 40V10.6h1V40zM227.22 40V9.8h1V40zM230.32 40V9.1h1V40zM233.42 40V14.3h1V40zM236.52 40V14.3h1V40zM239.62 40V12.8h1V40zM242.71 40V13.6h1V40zM245.81 40V19.6h1V40zM248.91 40V9.8h1V40zM252.01 40V14.3h1V40zM255.11 40V10.6h1V40zM258.21 40V10.6h1V40zM261.31 40V6.0h1V40zM264.41 40V13.6h1V40zM267.51 40V11.3h1V40zM270.60 40V18.9h1V40zM273.70 40V5.0h1V40zM276.80 40V21.9h1V40zM279.90 40V7.0h1V40zM283.00 40V12.8h1V40zM286.10 40V9.8h1V40zM289.20 40V18.9h1V40zM292.30 40V25.0h1V40zM295.40 40V14.3h1V40zM298.49 40V9.0h1V40zM301.59 40V14.3h1V40zM304.69 40V9.1h1V40zM307.79 40V18.1h1V40zM310.89 40V9.0h1V40zM313.99 40V14.3h1V40zM317.09 40V8.0h1V40zM320.19 40V9.8h1V40zM323.29 40V15.1h1V40zM326.38 40V11.3h1V40zM329.48 40V25.0h1V40zM332.58 40V12.1h1V40zM335.68 40V14.3h1V40zM338.78 40V18.1h1V40zM341.88 40V21.1h1V40zM344.98 40V17.4h1V40zM348.08 40V14.3h1V40zM351.18 40V11.3h1V40zM354.27 40V14.3h1V40zM357.37 40V9.8h1V40zM360.47 40V11.3h1V40zM363.57 40V9.8h1V40zM366.67 40V15.1h1V40zM369.77 40V14.3h1V40zM372.87 40V8.0h1V40zM375.97 40V19.6h1V40z"/><path d="M2.03 40V14.3h1V40zM5.13 40V17.4h1V40zM8.23 40V10.6h1V40zM11.33 40V14.3h1V40zM14.43 40V12.8h1V40zM17.53 40V14.3h1V40zM20.63 40V17.4h1V40zM23.73 40V12.8h1V40zM26.82 40V9.8h1V40zM29.92 40V15.1h1V40zM33.02 40V6.0h1V40zM36.12 40V12.8h1V40zM39.22 40V10.6h1V40zM42.32 40V9.1h1V40zM45.42 40V11.3h1V40zM48.52 40V14.3h1V40zM51.62 40V12.1h1V40zM54.71 40V3.7h1V40zM57.81 40V19.6h1V40zM60.91 40V12.5h1V40zM64.01 40V11.3h1V40zM67.11 40V15.1h1V40zM70.21 40V18.1h1V40zM73.31 40V9.1h1V40zM76.41 40V15.1h1V40zM79.51 40V14.3h1V40zM82.60 40V12.8h1V40zM85.70 40V9.1h1V40zM88.80 40V11.3h1V40zM91.90 40V7.0h1V40zM95.00 40V13.6h1V40zM98.10 40V15.1h1V40zM101.20 40V15.1h1V40zM104.30 40V16.6h1V40zM107.40 40V19.6h1V40zM110.49 40V12.8h1V40zM113.59 40V9.8h1V40zM116.69 40V12.1h1V40zM119.79 40V21.1h1V40zM122.89 40V3.7h1V40zM125.99 40V12.8h1V40zM129.09 40V11.5h1V40zM132.19 40V15.1h1V40zM135.29 40V24.2h1V40zM138.38 40V21.9h1V40zM141.48 40V12.8h1V40zM144.58 40V11.3h1V40zM147.68 40V18.1h1V40zM150.78 40V3.7h1V40zM153.88 40V12.1h1V40zM156.98 40V18.1h1V40zM160.08 40V12.8h1V40zM163.18 40V10.5h1V40zM166.27 40V9.0h1V40zM169.37 40V9.1h1V40zM172.47 40V12.1h1V40zM175.57 40V18.9h1V40zM178.67 40V13.6h1V40zM181.77 40V11.3h1V40zM184.87 40V12.8h1V40zM187.97 40V21.9h1V40zM191.07 40V10.6h1V40zM194.16 40V20.4h1V40zM197.26 40V13.6h1V40zM200.36 40V9.0h1V40zM203.46 40V10.6h1V40zM206.56 40V18.9h1V40zM209.66 40V9.0h1V40zM212.76 40V12.1h1V40zM215.86 40V14.3h1V40zM218.96 40V11.8h1V40zM222.05 40V14.3h1V40zM225.15 40V11.3h1V40zM228.25 40V12.8h1V40zM231.35 40V17.4h1V40zM234.45 40V18.1h1V40zM237.55 40V17.4h1V40zM240.65 40V18.9h1V40zM243.75 40V9.8h1V40zM246.85 40V11.3h1V40zM249.95 40V15.1h1V40zM253.04 40V19.6h1V40zM256.14 40V9.1h1V40zM259.24 40V16.6h1V40zM262.34 40V15.8h1V40zM265.44 40V24.2h1V40zM268.54 40V21.9h1V40zM271.64 40V10.5h1V40zM274.74 40V9.0h1V40zM277.84 40V13.6h1V40zM280.93 40V14.3h1V40zM284.03 40V15.1h1V40zM287.13 40V5.0h1V40zM290.23 40V10.6h1V40zM293.33 40V12.1h1V40zM296.43 40V9.8h1V40zM299.53 40V14.3h1V40zM302.63 40V10.6h1V40zM305.73 40V10.5h1V40zM308.82 40V13.6h1V40zM311.92 40V14.3h1V40zM315.02 40V15.1h1V40zM318.12 40V22.0h1V40zM321.22 40V15.8h1V40zM324.32 40V6.0h1V40zM327.42 40V12.8h1V40zM330.52 40V12.1h1V40zM333.62 40V4.0h1V40zM336.71 40V17.4h1V40zM339.81 40V15.8h1V40zM342.91 40V9.1h1V40zM346.01 40V18.1h1V40zM349.11 40V11.3h1V40zM352.21 40V10.5h1V40zM355.31 40V18.9h1V40zM358.41 40V10.5h1V40zM361.51 40V15.8h1V40zM364.60 40V10.8h1V40zM367.70 40V10.6h1V40zM370.80 40V10.6h1V40zM373.90 40V12.8h1V40zM377.00 40V11.3h1V40z"/><path d="M3.07 40V18.1h1V40zM6.16 40V9.0h1V40zM9.26 40V9.1h1V40zM12.36 40V10.6h1V40zM15.46 40V13.6h1V40zM18.56 40V11.3h1V40zM21.66 40V12.1h1V40zM24.76 40V9.8h1V40zM27.86 40V9.8h1V40zM30.96 40V10.5h1V40zM34.05 40V18.1h1V40zM37.15 40V11.3h1V40zM40.25 40V12.8h1V40zM43.35 40V13.6h1V40zM46.45 40V11.8h1V40zM49.55 40V16.6h1V40zM52.65 40V11.3h1V40zM55.75 40V14.3h1V40zM58.85 40V13.6h1V40zM61.95 40V13.6h1V40zM65.04 40V13.6h1V40zM68.14 40V16.6h1V40zM71.24 40V12.8h1V40zM74.34 40V21.0h1V40zM77.44 40V11.3h1V40zM80.54 40V11.3h1V40zM83.64 40V23.4h1V40zM86.74 40V14.3h1V40zM89.84 40V18.1h1V40zM92.93 40V18.9h1V40zM96.03 40V9.8h1V40zM99.13 40V11.3h1V40zM102.23 40V12.8h1V40zM105.33 40V9.1h1V40zM108.43 40V9.0h1V40zM111.53 40V12.1h1V40zM114.63 40V15.1h1V40zM117.73 40V20.4h1V40zM120.82 40V11.3h1V40zM123.92 40V9.8h1V40zM127.02 40V20.4h1V40zM130.12 40V10.6h1V40zM133.22 40V9.1h1V40zM136.32 40V12.1h1V40zM139.42 40V11.3h1V40zM142.52 40V12.1h1V40zM145.62 40V11.3h1V40zM148.71 40V13.6h1V40zM151.81 40V17.4h1V40zM154.91 40V21.1h1V40zM158.01 40V16.6h1V40zM161.11 40V19.6h1V40zM164.21 40V12.8h1V40zM167.31 40V12.1h1V40zM170.41 40V23.0h1V40zM173.51 40V17.4h1V40zM176.60 40V15.8h1V40zM179.70 40V13.6h1V40zM182.80 40V9.1h1V40zM185.90 40V13.6h1V40zM189.00 40V10.5h1V40zM192.10 40V12.1h1V40zM195.20 40V9.8h1V40zM198.30 40V9.1h1V40zM201.40 40V4.8h1V40zM204.49 40V15.8h1V40zM207.59 40V17.4h1V40zM210.69 40V12.1h1V40zM213.79 40V9.1h1V40zM216.89 40V9.0h1V40zM219.99 40V7.0h1V40zM223.09 40V10.5h1V40zM226.19 40V17.4h1V40zM229.29 40V9.1h1V40zM232.38 40V15.1h1V40zM235.48 40V11.3h1V40zM238.58 40V9.1h1V40zM241.68 40V12.8h1V40zM244.78 40V11.3h1V40zM247.88 40V18.1h1V40zM250.98 40V13.6h1V40zM254.08 40V15.1h1V40zM257.18 40V15.8h1V40zM260.27 40V19.6h1V40zM263.37 40V15.8h1V40zM266.47 40V12.8h1V40zM269.57 40V13.6h1V40zM272.67 40V13.6h1V40zM275.77 40V0.7h1V40zM278.87 40V19.6h1V40zM281.97 40V10.5h1V40zM285.07 40V10.6h1V40zM288.16 40V10.6h1V40zM291.26 40V15.8h1V40zM294.36 40V12.1h1V40zM297.46 40V15.1h1V40zM300.56 40V18.9h1V40zM303.66 40V12.8h1V40zM306.76 40V21.9h1V40zM309.86 40V19.6h1V40zM312.96 40V14.3h1V40zM316.05 40V18.9h1V40zM319.15 40V18.9h1V40zM322.25 40V11.3h1V40zM325.35 40V15.8h1V40zM328.45 40V9.8h1V40zM331.55 40V9.8h1V40zM334.65 40V12.8h1V40zM337.75 40V4.0h1V40zM340.85 40V17.4h1V40zM343.95 40V11.3h1V40zM347.04 40V9.8h1V40zM350.14 40V15.8h1V40zM353.24 40V9.0h1V40zM356.34 40V10.5h1V40zM359.44 40V4.4h1V40zM362.54 40V16.6h1V40zM365.64 40V6.0h1V40zM368.74 40V12.8h1V40zM371.84 40V13.5h1V40zM374.93 40V18.1h1V40z"/></g></svg></div><div class="c c5"><span class="tri-r"></span><svg class="ic k" width="14" height="14" viewBox="0 0 14 14"><path fill="#1b981b" transform="translate(.15 -.15)" d="M.5 7.9 1.6 7 4.1 9.9C6.2 6.1 8.9 2.9 12.2.5L12.5.9C9.7 3.700 7.100 7.500 5 11.9L3.900 12.100C3 10.400 1.800 9 .5 7.900z"/></svg><span class="lab p">PASS (2)</span></div></div>
<div class="tr row s"><div class="c c1">Ceftriaxone</div><div class="c c2">Broad</div><div class="c c3">48</div><div class="c c4"><svg class="spark" width="380" height="41" viewBox="0 0 380 41" fill="#008080"><g><path d="M1.00 40V18.0h1V40zM4.10 40V12.2h1V40zM7.20 40V11.8h1V40zM10.30 40V13.1h1V40zM13.40 40V13.1h1V40zM16.49 40V13.9h1V40zM19.59 40V11.4h1V40zM22.69 40V17.1h1V40zM25.79 40V23.7h1V40zM28.89 40V11.4h1V40zM31.99 40V11.8h1V40zM35.09 40V23.0h1V40zM38.19 40V12.2h1V40zM41.29 40V18.0h1V40zM44.38 40V16.3h1V40zM47.48 40V13.4h1V40zM50.58 40V11.8h1V40zM53.68 40V20.4h1V40zM56.78 40V18.0h1V40zM59.88 40V14.7h1V40zM62.98 40V10.0h1V40zM66.08 40V11.8h1V40zM69.18 40V23.0h1V40zM72.27 40V13.9h1V40zM75.37 40V16.3h1V40zM78.47 40V20.4h1V40zM81.57 40V15.5h1V40zM84.67 40V20.4h1V40zM87.77 40V11.0h1V40zM90.87 40V15.6h1V40zM93.97 40V13.1h1V40zM97.07 40V12.2h1V40zM100.16 40V15.5h1V40zM103.26 40V13.5h1V40zM106.36 40V31.0h1V40zM109.46 40V28.0h1V40zM112.56 40V32.7h1V40zM115.66 40V34.3h1V40zM118.76 40V36.7h1V40zM121.86 40V35.1h1V40zM124.96 40V34.3h1V40zM128.05 40V30.2h1V40zM131.15 40V33.5h1V40zM134.25 40V28.0h1V40zM137.35 40V29.4h1V40zM140.45 40V29.8h1V40zM143.55 40V33.5h1V40zM146.65 40V31.8h1V40zM149.75 40V32.7h1V40zM152.85 40V31.8h1V40zM155.95 40V28.0h1V40zM159.04 40V30.6h1V40zM162.14 40V34.3h1V40zM165.24 40V30.2h1V40zM168.34 40V35.1h1V40zM171.44 40V32.7h1V40zM174.54 40V34.3h1V40zM177.64 40V34.3h1V40zM180.74 40V28.0h1V40zM183.84 40V30.2h1V40zM186.93 40V34.3h1V40zM190.03 40V30.2h1V40zM193.13 40V31.8h1V40zM196.23 40V31.0h1V40zM199.33 40V31.0h1V40zM202.43 40V32.7h1V40zM205.53 40V31.8h1V40zM208.63 40V30.2h1V40zM211.73 40V35.9h1V40zM214.82 40V32.7h1V40zM217.92 40V31.8h1V40zM221.02 40V31.8h1V40zM224.12 40V31.8h1V40zM227.22 40V30.2h1V40zM230.32 40V32.7h1V40zM233.42 40V24.4h1V40zM236.52 40V32.7h1V40zM239.62 40V31.0h1V40zM242.71 40V32.7h1V40zM245.81 40V35.1h1V40zM248.91 40V29.8h1V40zM252.01 40V32.7h1V40zM255.11 40V34.3h1V40zM258.21 40V31.0h1V40zM261.31 40V31.8h1V40zM264.41 40V29.0h1V40zM267.51 40V34.3h1V40zM270.60 40V29.8h1V40zM273.70 40V32.4h1V40zM276.80 40V34.3h1V40zM279.90 40V31.8h1V40zM283.00 40V32.7h1V40zM286.10 40V32.7h1V40zM289.20 40V29.4h1V40zM292.30 40V34.3h1V40zM295.40 40V30.2h1V40zM298.49 40V36.7h1V40zM301.59 40V31.8h1V40zM304.69 40V35.1h1V40zM307.79 40V31.8h1V40zM310.89 40V33.5h1V40zM313.99 40V30.2h1V40zM317.09 40V31.8h1V40zM320.19 40V31.4h1V40zM323.29 40V34.3h1V40zM326.38 40V31.0h1V40zM329.48 40V33.5h1V40zM332.58 40V29.0h1V40zM335.68 40V31.6h1V40zM338.78 40V31.4h1V40zM341.88 40V36.7h1V40zM344.98 40V33.5h1V40zM348.08 40V33.5h1V40zM351.18 40V31.8h1V40zM354.27 40V32.7h1V40zM357.37 40V36.7h1V40zM360.47 40V31.8h1V40zM363.57 40V31.8h1V40zM366.67 40V29.4h1V40zM369.77 40V31.8h1V40zM372.87 40V32.7h1V40zM375.97 40V27.0h1V40z"/><path d="M2.03 40V15.5h1V40zM5.13 40V11.0h1V40zM8.23 40V15.5h1V40zM11.33 40V18.8h1V40zM14.43 40V13.9h1V40zM17.53 40V17.1h1V40zM20.63 40V14.7h1V40zM23.73 40V13.1h1V40zM26.82 40V13.1h1V40zM29.92 40V16.3h1V40zM33.02 40V15.5h1V40zM36.12 40V11.8h1V40zM39.22 40V15.5h1V40zM42.32 40V12.6h1V40zM45.42 40V15.5h1V40zM48.52 40V11.8h1V40zM51.62 40V13.9h1V40zM54.71 40V14.8h1V40zM57.81 40V18.8h1V40zM60.91 40V13.1h1V40zM64.01 40V19.6h1V40zM67.11 40V13.4h1V40zM70.21 40V18.0h1V40zM73.31 40V11.4h1V40zM76.41 40V17.1h1V40zM79.51 40V9.5h1V40zM82.60 40V12.2h1V40zM85.70 40V12.2h1V40zM88.80 40V14.8h1V40zM91.90 40V15.5h1V40zM95.00 40V13.4h1V40zM98.10 40V17.1h1V40zM101.20 40V17.1h1V40zM104.30 40V17.1h1V40zM107.40 40V34.3h1V40zM110.49 40V33.6h1V40zM113.59 40V34.3h1V40zM116.69 40V31.0h1V40zM119.79 40V32.7h1V40zM122.89 40V33.5h1V40zM125.99 40V31.8h1V40zM129.09 40V35.1h1V40zM132.19 40V31.8h1V40zM135.29 40V32.7h1V40zM138.38 40V30.6h1V40zM141.48 40V33.5h1V40zM144.58 40V31.8h1V40zM147.68 40V34.3h1V40zM150.78 40V32.7h1V40zM153.88 40V36.7h1V40zM156.98 40V32.7h1V40zM160.08 40V31.8h1V40zM163.18 40V30.2h1V40zM166.27 40V35.1h1V40zM169.37 40V31.8h1V40zM172.47 40V32.0h1V40zM175.57 40V35.9h1V40zM178.67 40V33.5h1V40zM181.77 40V33.6h1V40zM184.87 40V34.3h1V40zM187.97 40V33.5h1V40zM191.07 40V34.3h1V40zM194.16 40V32.7h1V40zM197.26 40V31.8h1V40zM200.36 40V35.1h1V40zM203.46 40V27.6h1V40zM206.56 40V32.7h1V40zM209.66 40V31.8h1V40zM212.76 40V31.8h1V40zM215.86 40V35.1h1V40zM218.96 40V32.7h1V40zM222.05 40V29.4h1V40zM225.15 40V32.7h1V40zM228.25 40V34.3h1V40zM231.35 40V34.3h1V40zM234.45 40V35.1h1V40zM237.55 40V33.5h1V40zM240.65 40V36.7h1V40zM243.75 40V30.2h1V40zM246.85 40V32.7h1V40zM249.95 40V33.5h1V40zM253.04 40V33.5h1V40zM256.14 40V32.7h1V40zM259.24 40V31.0h1V40zM262.34 40V30.6h1V40zM265.44 40V30.2h1V40zM268.54 40V29.8h1V40zM271.64 40V30.6h1V40zM274.74 40V27.6h1V40zM277.84 40V30.2h1V40zM280.93 40V31.0h1V40zM284.03 40V35.1h1V40zM287.13 40V31.8h1V40zM290.23 40V29.0h1V40zM293.33 40V32.7h1V40zM296.43 40V30.2h1V40zM299.53 40V36.7h1V40zM302.63 40V30.2h1V40zM305.73 40V32.7h1V40zM308.82 40V33.5h1V40zM311.92 40V29.4h1V40zM315.02 40V30.2h1V40zM318.12 40V35.1h1V40zM321.22 40V35.1h1V40zM324.32 40V30.6h1V40zM327.42 40V32.7h1V40zM330.52 40V33.5h1V40zM333.62 40V31.0h1V40zM336.71 40V27.6h1V40zM339.81 40V29.8h1V40zM342.91 40V32.7h1V40zM346.01 40V31.8h1V40zM349.11 40V31.4h1V40zM352.21 40V29.0h1V40zM355.31 40V27.6h1V40zM358.41 40V31.0h1V40zM361.51 40V29.4h1V40zM364.60 40V29.0h1V40zM367.70 40V30.6h1V40zM370.80 40V31.0h1V40zM373.90 40V35.1h1V40zM377.00 40V31.0h1V40z"/><path d="M3.07 40V12.6h1V40zM6.16 40V22.0h1V40zM9.26 40V27.0h1V40zM12.36 40V8.0h1V40zM15.46 40V16.3h1V40zM18.56 40V16.3h1V40zM21.66 40V11.0h1V40zM24.76 40V11.0h1V40zM27.86 40V15.5h1V40zM30.96 40V11.0h1V40zM34.05 40V3.7h1V40zM37.15 40V15.5h1V40zM40.25 40V13.4h1V40zM43.35 40V16.3h1V40zM46.45 40V0.8h1V40zM49.55 40V17.1h1V40zM52.65 40V24.0h1V40zM55.75 40V10.0h1V40zM58.85 40V13.9h1V40zM61.95 40V14.7h1V40zM65.04 40V11.4h1V40zM68.14 40V12.6h1V40zM71.24 40V13.1h1V40zM74.34 40V18.8h1V40zM77.44 40V11.0h1V40zM80.54 40V16.3h1V40zM83.64 40V18.8h1V40zM86.74 40V15.5h1V40zM89.84 40V10.0h1V40zM92.93 40V16.3h1V40zM96.03 40V7.3h1V40zM99.13 40V11.0h1V40zM102.23 40V9.5h1V40zM105.33 40V30.2h1V40zM108.43 40V32.0h1V40zM111.53 40V31.0h1V40zM114.63 40V32.7h1V40zM117.73 40V30.2h1V40zM120.82 40V36.7h1V40zM123.92 40V32.7h1V40zM127.02 40V31.8h1V40zM130.12 40V32.7h1V40zM133.22 40V33.5h1V40zM136.32 40V32.7h1V40zM139.42 40V32.7h1V40zM142.52 40V31.8h1V40zM145.62 40V31.0h1V40zM148.71 40V31.8h1V40zM151.81 40V35.9h1V40zM154.91 40V32.0h1V40zM158.01 40V31.8h1V40zM161.11 40V31.8h1V40zM164.21 40V30.6h1V40zM167.31 40V31.0h1V40zM170.41 40V32.7h1V40zM173.51 40V28.0h1V40zM176.60 40V29.4h1V40zM179.70 40V32.8h1V40zM182.80 40V31.8h1V40zM185.90 40V34.3h1V40zM189.00 40V35.1h1V40zM192.10 40V30.6h1V40zM195.20 40V31.0h1V40zM198.30 40V33.5h1V40zM201.40 40V29.4h1V40zM204.49 40V31.6h1V40zM207.59 40V31.0h1V40zM210.69 40V32.7h1V40zM213.79 40V35.9h1V40zM216.89 40V33.5h1V40zM219.99 40V32.7h1V40zM223.09 40V34.3h1V40zM226.19 40V31.0h1V40zM229.29 40V33.5h1V40zM232.38 40V31.8h1V40zM235.48 40V29.4h1V40zM238.58 40V33.5h1V40zM241.68 40V34.3h1V40zM244.78 40V29.0h1V40zM247.88 40V34.3h1V40zM250.98 40V33.5h1V40zM254.08 40V31.0h1V40zM257.18 40V32.7h1V40zM260.27 40V31.4h1V40zM263.37 40V29.8h1V40zM266.47 40V26.0h1V40zM269.57 40V31.0h1V40zM272.67 40V31.8h1V40zM275.77 40V33.5h1V40zM278.87 40V36.7h1V40zM281.97 40V34.3h1V40zM285.07 40V29.4h1V40zM288.16 40V32.7h1V40zM291.26 40V31.0h1V40zM294.36 40V32.7h1V40zM297.46 40V35.1h1V40zM300.56 40V34.3h1V40zM303.66 40V31.0h1V40zM306.76 40V31.8h1V40zM309.86 40V35.9h1V40zM312.96 40V32.7h1V40zM316.05 40V30.2h1V40zM319.15 40V31.8h1V40zM322.25 40V31.8h1V40zM325.35 40V36.7h1V40zM328.45 40V31.4h1V40zM331.55 40V29.4h1V40zM334.65 40V31.8h1V40zM337.75 40V32.7h1V40zM340.85 40V32.7h1V40zM343.95 40V30.2h1V40zM347.04 40V35.1h1V40zM350.14 40V31.4h1V40zM353.24 40V31.0h1V40zM356.34 40V31.6h1V40zM359.44 40V31.0h1V40zM362.54 40V31.8h1V40zM365.64 40V37.6h1V40zM368.74 40V32.7h1V40zM371.84 40V27.0h1V40zM374.93 40V31.8h1V40z"/></g><g><path d="M1.00 40V18.0h1V40zM4.10 40V12.2h1V40zM7.20 40V11.8h1V40zM10.30 40V13.1h1V40zM13.40 40V13.1h1V40zM16.49 40V13.9h1V40zM19.59 40V11.4h1V40zM22.69 40V17.1h1V40zM25.79 40V23.7h1V40zM28.89 40V11.4h1V40zM31.99 40V11.8h1V40zM35.09 40V23.0h1V40zM38.19 40V12.2h1V40zM41.29 40V18.0h1V40zM44.38 40V16.3h1V40zM47.48 40V13.4h1V40zM50.58 40V11.8h1V40zM53.68 40V20.4h1V40zM56.78 40V18.0h1V40zM59.88 40V14.7h1V40zM62.98 40V10.0h1V40zM66.08 40V11.8h1V40zM69.18 40V23.0h1V40zM72.27 40V13.9h1V40zM75.37 40V16.3h1V40zM78.47 40V20.4h1V40zM81.57 40V15.5h1V40zM84.67 40V20.4h1V40zM87.77 40V11.0h1V40zM90.87 40V15.6h1V40zM93.97 40V13.1h1V40zM97.07 40V12.2h1V40zM100.16 40V15.5h1V40zM103.26 40V13.5h1V40zM106.36 40V31.0h1V40zM109.46 40V28.0h1V40zM112.56 40V32.7h1V40zM115.66 40V34.3h1V40zM118.76 40V36.7h1V40zM121.86 40V35.1h1V40zM124.96 40V34.3h1V40zM128.05 40V30.2h1V40zM131.15 40V33.5h1V40zM134.25 40V28.0h1V40zM137.35 40V29.4h1V40zM140.45 40V29.8h1V40zM143.55 40V33.5h1V40zM146.65 40V31.8h1V40zM149.75 40V32.7h1V40zM152.85 40V31.8h1V40zM155.95 40V28.0h1V40zM159.04 40V30.6h1V40zM162.14 40V34.3h1V40zM165.24 40V30.2h1V40zM168.34 40V35.1h1V40zM171.44 40V32.7h1V40zM174.54 40V34.3h1V40zM177.64 40V34.3h1V40zM180.74 40V28.0h1V40zM183.84 40V30.2h1V40zM186.93 40V34.3h1V40zM190.03 40V30.2h1V40zM193.13 40V31.8h1V40zM196.23 40V31.0h1V40zM199.33 40V31.0h1V40zM202.43 40V32.7h1V40zM205.53 40V31.8h1V40zM208.63 40V30.2h1V40zM211.73 40V35.9h1V40zM214.82 40V32.7h1V40zM217.92 40V31.8h1V40zM221.02 40V31.8h1V40zM224.12 40V31.8h1V40zM227.22 40V30.2h1V40zM230.32 40V32.7h1V40zM233.42 40V24.4h1V40zM236.52 40V32.7h1V40zM239.62 40V31.0h1V40zM242.71 40V32.7h1V40zM245.81 40V35.1h1V40zM248.91 40V29.8h1V40zM252.01 40V32.7h1V40zM255.11 40V34.3h1V40zM258.21 40V31.0h1V40zM261.31 40V31.8h1V40zM264.41 40V29.0h1V40zM267.51 40V34.3h1V40zM270.60 40V29.8h1V40zM273.70 40V32.4h1V40zM276.80 40V34.3h1V40zM279.90 40V31.8h1V40zM283.00 40V32.7h1V40zM286.10 40V32.7h1V40zM289.20 40V29.4h1V40zM292.30 40V34.3h1V40zM295.40 40V30.2h1V40zM298.49 40V36.7h1V40zM301.59 40V31.8h1V40zM304.69 40V35.1h1V40zM307.79 40V31.8h1V40zM310.89 40V33.5h1V40zM313.99 40V30.2h1V40zM317.09 40V31.8h1V40zM320.19 40V31.4h1V40zM323.29 40V34.3h1V40zM326.38 40V31.0h1V40zM329.48 40V33.5h1V40zM332.58 40V29.0h1V40zM335.68 40V31.6h1V40zM338.78 40V31.4h1V40zM341.88 40V36.7h1V40zM344.98 40V33.5h1V40zM348.08 40V33.5h1V40zM351.18 40V31.8h1V40zM354.27 40V32.7h1V40zM357.37 40V36.7h1V40zM360.47 40V31.8h1V40zM363.57 40V31.8h1V40zM366.67 40V29.4h1V40zM369.77 40V31.8h1V40zM372.87 40V32.7h1V40zM375.97 40V27.0h1V40z"/><path d="M2.03 40V15.5h1V40zM5.13 40V11.0h1V40zM8.23 40V15.5h1V40zM11.33 40V18.8h1V40zM14.43 40V13.9h1V40zM17.53 40V17.1h1V40zM20.63 40V14.7h1V40zM23.73 40V13.1h1V40zM26.82 40V13.1h1V40zM29.92 40V16.3h1V40zM33.02 40V15.5h1V40zM36.12 40V11.8h1V40zM39.22 40V15.5h1V40zM42.32 40V12.6h1V40zM45.42 40V15.5h1V40zM48.52 40V11.8h1V40zM51.62 40V13.9h1V40zM54.71 40V14.8h1V40zM57.81 40V18.8h1V40zM60.91 40V13.1h1V40zM64.01 40V19.6h1V40zM67.11 40V13.4h1V40zM70.21 40V18.0h1V40zM73.31 40V11.4h1V40zM76.41 40V17.1h1V40zM79.51 40V9.5h1V40zM82.60 40V12.2h1V40zM85.70 40V12.2h1V40zM88.80 40V14.8h1V40zM91.90 40V15.5h1V40zM95.00 40V13.4h1V40zM98.10 40V17.1h1V40zM101.20 40V17.1h1V40zM104.30 40V17.1h1V40zM107.40 40V34.3h1V40zM110.49 40V33.6h1V40zM113.59 40V34.3h1V40zM116.69 40V31.0h1V40zM119.79 40V32.7h1V40zM122.89 40V33.5h1V40zM125.99 40V31.8h1V40zM129.09 40V35.1h1V40zM132.19 40V31.8h1V40zM135.29 40V32.7h1V40zM138.38 40V30.6h1V40zM141.48 40V33.5h1V40zM144.58 40V31.8h1V40zM147.68 40V34.3h1V40zM150.78 40V32.7h1V40zM153.88 40V36.7h1V40zM156.98 40V32.7h1V40zM160.08 40V31.8h1V40zM163.18 40V30.2h1V40zM166.27 40V35.1h1V40zM169.37 40V31.8h1V40zM172.47 40V32.0h1V40zM175.57 40V35.9h1V40zM178.67 40V33.5h1V40zM181.77 40V33.6h1V40zM184.87 40V34.3h1V40zM187.97 40V33.5h1V40zM191.07 40V34.3h1V40zM194.16 40V32.7h1V40zM197.26 40V31.8h1V40zM200.36 40V35.1h1V40zM203.46 40V27.6h1V40zM206.56 40V32.7h1V40zM209.66 40V31.8h1V40zM212.76 40V31.8h1V40zM215.86 40V35.1h1V40zM218.96 40V32.7h1V40zM222.05 40V29.4h1V40zM225.15 40V32.7h1V40zM228.25 40V34.3h1V40zM231.35 40V34.3h1V40zM234.45 40V35.1h1V40zM237.55 40V33.5h1V40zM240.65 40V36.7h1V40zM243.75 40V30.2h1V40zM246.85 40V32.7h1V40zM249.95 40V33.5h1V40zM253.04 40V33.5h1V40zM256.14 40V32.7h1V40zM259.24 40V31.0h1V40zM262.34 40V30.6h1V40zM265.44 40V30.2h1V40zM268.54 40V29.8h1V40zM271.64 40V30.6h1V40zM274.74 40V27.6h1V40zM277.84 40V30.2h1V40zM280.93 40V31.0h1V40zM284.03 40V35.1h1V40zM287.13 40V31.8h1V40zM290.23 40V29.0h1V40zM293.33 40V32.7h1V40zM296.43 40V30.2h1V40zM299.53 40V36.7h1V40zM302.63 40V30.2h1V40zM305.73 40V32.7h1V40zM308.82 40V33.5h1V40zM311.92 40V29.4h1V40zM315.02 40V30.2h1V40zM318.12 40V35.1h1V40zM321.22 40V35.1h1V40zM324.32 40V30.6h1V40zM327.42 40V32.7h1V40zM330.52 40V33.5h1V40zM333.62 40V31.0h1V40zM336.71 40V27.6h1V40zM339.81 40V29.8h1V40zM342.91 40V32.7h1V40zM346.01 40V31.8h1V40zM349.11 40V31.4h1V40zM352.21 40V29.0h1V40zM355.31 40V27.6h1V40zM358.41 40V31.0h1V40zM361.51 40V29.4h1V40zM364.60 40V29.0h1V40zM367.70 40V30.6h1V40zM370.80 40V31.0h1V40zM373.90 40V35.1h1V40zM377.00 40V31.0h1V40z"/><path d="M3.07 40V12.6h1V40zM6.16 40V22.0h1V40zM9.26 40V27.0h1V40zM12.36 40V8.0h1V40zM15.46 40V16.3h1V40zM18.56 40V16.3h1V40zM21.66 40V11.0h1V40zM24.76 40V11.0h1V40zM27.86 40V15.5h1V40zM30.96 40V11.0h1V40zM34.05 40V3.7h1V40zM37.15 40V15.5h1V40zM40.25 40V13.4h1V40zM43.35 40V16.3h1V40zM46.45 40V0.8h1V40zM49.55 40V17.1h1V40zM52.65 40V24.0h1V40zM55.75 40V10.0h1V40zM58.85 40V13.9h1V40zM61.95 40V14.7h1V40zM65.04 40V11.4h1V40zM68.14 40V12.6h1V40zM71.24 40V13.1h1V40zM74.34 40V18.8h1V40zM77.44 40V11.0h1V40zM80.54 40V16.3h1V40zM83.64 40V18.8h1V40zM86.74 40V15.5h1V40zM89.84 40V10.0h1V40zM92.93 40V16.3h1V40zM96.03 40V7.3h1V40zM99.13 40V11.0h1V40zM102.23 40V9.5h1V40zM105.33 40V30.2h1V40zM108.43 40V32.0h1V40zM111.53 40V31.0h1V40zM114.63 40V32.7h1V40zM117.73 40V30.2h1V40zM120.82 40V36.7h1V40zM123.92 40V32.7h1V40zM127.02 40V31.8h1V40zM130.12 40V32.7h1V40zM133.22 40V33.5h1V40zM136.32 40V32.7h1V40zM139.42 40V32.7h1V40zM142.52 40V31.8h1V40zM145.62 40V31.0h1V40zM148.71 40V31.8h1V40zM151.81 40V35.9h1V40zM154.91 40V32.0h1V40zM158.01 40V31.8h1V40zM161.11 40V31.8h1V40zM164.21 40V30.6h1V40zM167.31 40V31.0h1V40zM170.41 40V32.7h1V40zM173.51 40V28.0h1V40zM176.60 40V29.4h1V40zM179.70 40V32.8h1V40zM182.80 40V31.8h1V40zM185.90 40V34.3h1V40zM189.00 40V35.1h1V40zM192.10 40V30.6h1V40zM195.20 40V31.0h1V40zM198.30 40V33.5h1V40zM201.40 40V29.4h1V40zM204.49 40V31.6h1V40zM207.59 40V31.0h1V40zM210.69 40V32.7h1V40zM213.79 40V35.9h1V40zM216.89 40V33.5h1V40zM219.99 40V32.7h1V40zM223.09 40V34.3h1V40zM226.19 40V31.0h1V40zM229.29 40V33.5h1V40zM232.38 40V31.8h1V40zM235.48 40V29.4h1V40zM238.58 40V33.5h1V40zM241.68 40V34.3h1V40zM244.78 40V29.0h1V40zM247.88 40V34.3h1V40zM250.98 40V33.5h1V40zM254.08 40V31.0h1V40zM257.18 40V32.7h1V40zM260.27 40V31.4h1V40zM263.37 40V29.8h1V40zM266.47 40V26.0h1V40zM269.57 40V31.0h1V40zM272.67 40V31.8h1V40zM275.77 40V33.5h1V40zM278.87 40V36.7h1V40zM281.97 40V34.3h1V40zM285.07 40V29.4h1V40zM288.16 40V32.7h1V40zM291.26 40V31.0h1V40zM294.36 40V32.7h1V40zM297.46 40V35.1h1V40zM300.56 40V34.3h1V40zM303.66 40V31.0h1V40zM306.76 40V31.8h1V40zM309.86 40V35.9h1V40zM312.96 40V32.7h1V40zM316.05 40V30.2h1V40zM319.15 40V31.8h1V40zM322.25 40V31.8h1V40zM325.35 40V36.7h1V40zM328.45 40V31.4h1V40zM331.55 40V29.4h1V40zM334.65 40V31.8h1V40zM337.75 40V32.7h1V40zM340.85 40V32.7h1V40zM343.95 40V30.2h1V40zM347.04 40V35.1h1V40zM350.14 40V31.4h1V40zM353.24 40V31.0h1V40zM356.34 40V31.6h1V40zM359.44 40V31.0h1V40zM362.54 40V31.8h1V40zM365.64 40V37.6h1V40zM368.74 40V32.7h1V40zM371.84 40V27.0h1V40zM374.93 40V31.8h1V40z"/></g></svg></div><div class="c c5"><span class="tri-r"></span><svg class="ic k" width="14" height="14" viewBox="0 0 14 14"><path fill="#1b981b" transform="translate(.15 -.15)" d="M.5 7.9 1.6 7 4.1 9.9C6.2 6.1 8.9 2.9 12.2.5L12.5.9C9.7 3.700 7.100 7.500 5 11.9L3.900 12.100C3 10.400 1.800 9 .5 7.900z"/></svg><span class="lab p">PASS (2)</span></div></div>
<div class="tr row"><div class="c c1">Metronidazole</div><div class="c c2">Limited</div><div class="c c3">34</div><div class="c c4"><svg class="spark" width="380" height="41" viewBox="0 0 380 41" fill="#008080"><g><path d="M1.00 40V13.7h1V40zM4.10 40V20.6h1V40zM7.20 40V19.4h1V40zM10.30 40V17.1h1V40zM13.40 40V12.6h1V40zM16.49 40V24.0h1V40zM19.59 40V16.0h1V40zM22.69 40V19.4h1V40zM25.79 40V25.1h1V40zM28.89 40V26.3h1V40zM31.99 40V18.3h1V40zM35.09 40V14.9h1V40zM38.19 40V18.3h1V40zM41.29 40V8.6h1V40zM44.38 40V7.0h1V40zM47.48 40V8.0h1V40zM50.58 40V13.7h1V40zM53.68 40V22.9h1V40zM56.78 40V13.7h1V40zM59.88 40V20.6h1V40zM62.98 40V19.4h1V40zM66.08 40V13.7h1V40zM69.18 40V19.4h1V40zM72.27 40V24.0h1V40zM75.37 40V16.0h1V40zM78.47 40V21.7h1V40zM81.57 40V18.3h1V40zM84.67 40V25.1h1V40zM87.77 40V17.1h1V40zM90.87 40V22.9h1V40zM93.97 40V12.0h1V40zM97.07 40V20.6h1V40zM100.16 40V21.7h1V40zM103.26 40V19.4h1V40zM106.36 40V14.9h1V40zM109.46 40V25.1h1V40zM112.56 40V21.7h1V40zM115.66 40V27.0h1V40zM118.76 40V22.9h1V40zM121.86 40V13.7h1V40zM124.96 40V7.0h1V40zM128.05 40V25.1h1V40zM131.15 40V4.8h1V40zM134.25 40V21.7h1V40zM137.35 40V30.9h1V40zM140.45 40V21.7h1V40zM143.55 40V18.3h1V40zM146.65 40V16.0h1V40zM149.75 40V20.6h1V40zM152.85 40V20.6h1V40zM155.95 40V16.0h1V40zM159.04 40V14.9h1V40zM162.14 40V22.9h1V40zM165.24 40V22.9h1V40zM168.34 40V33.1h1V40zM171.44 40V11.0h1V40zM174.54 40V21.7h1V40zM177.64 40V17.1h1V40zM180.74 40V15.4h1V40zM183.84 40V14.9h1V40zM186.93 40V18.3h1V40zM190.03 40V1.1h1V40zM193.13 40V12.6h1V40zM196.23 40V21.7h1V40zM199.33 40V19.4h1V40zM202.43 40V22.9h1V40zM205.53 40V17.1h1V40zM208.63 40V12.6h1V40zM211.73 40V18.3h1V40zM214.82 40V17.1h1V40zM217.92 40V7.0h1V40zM221.02 40V18.3h1V40zM224.12 40V21.7h1V40zM227.22 40V16.0h1V40zM230.32 40V27.4h1V40zM233.42 40V20.6h1V40zM236.52 40V19.4h1V40zM239.62 40V14.9h1V40zM242.71 40V24.0h1V40zM245.81 40V19.4h1V40zM248.91 40V14.9h1V40zM252.01 40V18.3h1V40zM255.11 40V11.0h1V40zM258.21 40V14.9h1V40zM261.31 40V19.4h1V40zM264.41 40V24.0h1V40zM267.51 40V12.0h1V40zM270.60 40V18.3h1V40zM273.70 40V18.3h1V40zM276.80 40V29.7h1V40zM279.90 40V22.9h1V40zM283.00 40V21.7h1V40zM286.10 40V27.4h1V40zM289.20 40V16.0h1V40zM292.30 40V16.0h1V40zM295.40 40V24.0h1V40zM298.49 40V20.6h1V40zM301.59 40V30.9h1V40zM304.69 40V14.9h1V40zM307.79 40V20.6h1V40zM310.89 40V16.0h1V40zM313.99 40V21.7h1V40zM317.09 40V21.7h1V40zM320.19 40V22.9h1V40zM323.29 40V18.3h1V40zM326.38 40V25.1h1V40zM329.48 40V26.3h1V40zM332.58 40V18.3h1V40zM335.68 40V24.0h1V40zM338.78 40V14.9h1V40zM341.88 40V17.1h1V40zM344.98 40V19.4h1V40zM348.08 40V12.6h1V40zM351.18 40V22.9h1V40zM354.27 40V19.4h1V40zM357.37 40V27.4h1V40zM360.47 40V21.7h1V40zM363.57 40V12.0h1V40zM366.67 40V13.7h1V40zM369.77 40V21.7h1V40zM372.87 40V28.6h1V40zM375.97 40V17.1h1V40z"/><path d="M2.03 40V14.9h1V40zM5.13 40V18.3h1V40zM8.23 40V14.3h1V40zM11.33 40V19.4h1V40zM14.43 40V18.3h1V40zM17.53 40V13.7h1V40zM20.63 40V13.7h1V40zM23.73 40V26.3h1V40zM26.82 40V21.7h1V40zM29.92 40V29.0h1V40zM33.02 40V16.0h1V40zM36.12 40V19.4h1V40zM39.22 40V20.6h1V40zM42.32 40V17.1h1V40zM45.42 40V16.0h1V40zM48.52 40V25.1h1V40zM51.62 40V19.4h1V40zM54.71 40V17.1h1V40zM57.81 40V22.9h1V40zM60.91 40V19.4h1V40zM64.01 40V11.0h1V40zM67.11 40V21.7h1V40zM70.21 40V25.1h1V40zM73.31 40V16.0h1V40zM76.41 40V15.0h1V40zM79.51 40V24.0h1V40zM82.60 40V18.3h1V40zM85.70 40V24.0h1V40zM88.80 40V16.0h1V40zM91.90 40V13.7h1V40zM95.00 40V14.3h1V40zM98.10 40V20.6h1V40zM101.20 40V20.6h1V40zM104.30 40V17.1h1V40zM107.40 40V13.7h1V40zM110.49 40V16.0h1V40zM113.59 40V22.9h1V40zM116.69 40V19.4h1V40zM119.79 40V13.1h1V40zM122.89 40V21.7h1V40zM125.99 40V25.1h1V40zM129.09 40V14.3h1V40zM132.19 40V28.6h1V40zM135.29 40V26.3h1V40zM138.38 40V24.0h1V40zM141.48 40V20.6h1V40zM144.58 40V12.6h1V40zM147.68 40V8.0h1V40zM150.78 40V17.1h1V40zM153.88 40V18.3h1V40zM156.98 40V12.6h1V40zM160.08 40V18.3h1V40zM163.18 40V24.0h1V40zM166.27 40V17.1h1V40zM169.37 40V14.3h1V40zM172.47 40V29.7h1V40zM175.57 40V16.0h1V40zM178.67 40V17.1h1V40zM181.77 40V27.4h1V40zM184.87 40V6.0h1V40zM187.97 40V24.0h1V40zM191.07 40V17.1h1V40zM194.16 40V19.4h1V40zM197.26 40V17.1h1V40zM200.36 40V25.1h1V40zM203.46 40V27.4h1V40zM206.56 40V19.4h1V40zM209.66 40V25.1h1V40zM212.76 40V19.4h1V40zM215.86 40V24.0h1V40zM218.96 40V24.0h1V40zM222.05 40V13.7h1V40zM225.15 40V11.0h1V40zM228.25 40V16.0h1V40zM231.35 40V22.9h1V40zM234.45 40V20.6h1V40zM237.55 40V17.1h1V40zM240.65 40V28.6h1V40zM243.75 40V18.3h1V40zM246.85 40V25.1h1V40zM249.95 40V24.0h1V40zM253.04 40V20.6h1V40zM256.14 40V26.3h1V40zM259.24 40V28.6h1V40zM262.34 40V19.4h1V40zM265.44 40V7.0h1V40zM268.54 40V18.3h1V40zM271.64 40V14.9h1V40zM274.74 40V14.9h1V40zM277.84 40V25.1h1V40zM280.93 40V12.6h1V40zM284.03 40V19.4h1V40zM287.13 40V18.3h1V40zM290.23 40V20.6h1V40zM293.33 40V16.0h1V40zM296.43 40V4.8h1V40zM299.53 40V16.0h1V40zM302.63 40V27.4h1V40zM305.73 40V24.0h1V40zM308.82 40V24.0h1V40zM311.92 40V9.5h1V40zM315.02 40V28.6h1V40zM318.12 40V30.9h1V40zM321.22 40V32.0h1V40zM324.32 40V20.6h1V40zM327.42 40V20.6h1V40zM330.52 40V18.3h1V40zM333.62 40V17.1h1V40zM336.71 40V14.3h1V40zM339.81 40V14.3h1V40zM342.91 40V24.0h1V40zM346.01 40V18.3h1V40zM349.11 40V18.3h1V40zM352.21 40V19.4h1V40zM355.31 40V18.3h1V40zM358.41 40V20.6h1V40zM361.51 40V16.0h1V40zM364.60 40V18.3h1V40zM367.70 40V20.6h1V40zM370.80 40V11.0h1V40zM373.90 40V19.4h1V40zM377.00 40V21.7h1V40z"/><path d="M3.07 40V4.8h1V40zM6.16 40V8.0h1V40zM9.26 40V17.1h1V40zM12.36 40V22.9h1V40zM15.46 40V24.0h1V40zM18.56 40V3.7h1V40zM21.66 40V15.4h1V40zM24.76 40V13.1h1V40zM27.86 40V7.0h1V40zM30.96 40V12.6h1V40zM34.05 40V12.0h1V40zM37.15 40V29.7h1V40zM40.25 40V21.7h1V40zM43.35 40V26.3h1V40zM46.45 40V21.7h1V40zM49.55 40V18.3h1V40zM52.65 40V12.6h1V40zM55.75 40V18.3h1V40zM58.85 40V20.6h1V40zM61.95 40V12.6h1V40zM65.04 40V24.0h1V40zM68.14 40V17.1h1V40zM71.24 40V18.3h1V40zM74.34 40V32.2h1V40zM77.44 40V11.0h1V40zM80.54 40V15.4h1V40zM83.64 40V25.1h1V40zM86.74 40V2.7h1V40zM89.84 40V20.6h1V40zM92.93 40V18.3h1V40zM96.03 40V18.3h1V40zM99.13 40V25.1h1V40zM102.23 40V19.4h1V40zM105.33 40V6.0h1V40zM108.43 40V17.1h1V40zM111.53 40V25.1h1V40zM114.63 40V16.0h1V40zM117.73 40V17.1h1V40zM120.82 40V20.6h1V40zM123.92 40V17.1h1V40zM127.02 40V19.4h1V40zM130.12 40V20.6h1V40zM133.22 40V27.0h1V40zM136.32 40V2.3h1V40zM139.42 40V21.7h1V40zM142.52 40V12.0h1V40zM145.62 40V22.9h1V40zM148.71 40V22.9h1V40zM151.81 40V15.4h1V40zM154.91 40V14.9h1V40zM158.01 40V16.0h1V40zM161.11 40V4.8h1V40zM164.21 40V13.1h1V40zM167.31 40V25.1h1V40zM170.41 40V21.7h1V40zM173.51 40V14.9h1V40zM176.60 40V17.1h1V40zM179.70 40V20.6h1V40zM182.80 40V15.4h1V40zM185.90 40V19.4h1V40zM189.00 40V27.4h1V40zM192.10 40V21.7h1V40zM195.20 40V21.7h1V40zM198.30 40V16.0h1V40zM201.40 40V14.9h1V40zM204.49 40V16.0h1V40zM207.59 40V26.0h1V40zM210.69 40V12.6h1V40zM213.79 40V21.7h1V40zM216.89 40V22.9h1V40zM219.99 40V27.4h1V40zM223.09 40V27.4h1V40zM226.19 40V16.1h1V40zM229.29 40V16.0h1V40zM232.38 40V20.6h1V40zM235.48 40V12.6h1V40zM238.58 40V18.3h1V40zM241.68 40V17.1h1V40zM244.78 40V12.6h1V40zM247.88 40V13.1h1V40zM250.98 40V16.0h1V40zM254.08 40V26.0h1V40zM257.18 40V12.0h1V40zM260.27 40V20.6h1V40zM263.37 40V16.0h1V40zM266.47 40V18.3h1V40zM269.57 40V14.3h1V40zM272.67 40V16.0h1V40zM275.77 40V20.6h1V40zM278.87 40V12.0h1V40zM281.97 40V17.1h1V40zM285.07 40V25.1h1V40zM288.16 40V14.3h1V40zM291.26 40V9.4h1V40zM294.36 40V20.6h1V40zM297.46 40V19.4h1V40zM300.56 40V27.0h1V40zM303.66 40V17.1h1V40zM306.76 40V7.0h1V40zM309.86 40V22.9h1V40zM312.96 40V22.9h1V40zM316.05 40V18.3h1V40zM319.15 40V8.6h1V40zM322.25 40V21.7h1V40zM325.35 40V19.4h1V40zM328.45 40V12.0h1V40zM331.55 40V16.0h1V40zM334.65 40V26.3h1V40zM337.75 40V24.0h1V40zM340.85 40V19.4h1V40zM343.95 40V18.3h1V40zM347.04 40V25.1h1V40zM350.14 40V30.0h1V40zM353.24 40V16.0h1V40zM356.34 40V17.1h1V40zM359.44 40V21.7h1V40zM362.54 40V3.7h1V40zM365.64 40V16.0h1V40zM368.74 40V15.4h1V40zM371.84 40V16.0h1V40zM374.93 40V21.7h1V40z"/></g><g><path d="M1.00 40V13.7h1V40zM4.10 40V20.6h1V40zM7.20 40V19.4h1V40zM10.30 40V17.1h1V40zM13.40 40V12.6h1V40zM16.49 40V24.0h1V40zM19.59 40V16.0h1V40zM22.69 40V19.4h1V40zM25.79 40V25.1h1V40zM28.89 40V26.3h1V40zM31.99 40V18.3h1V40zM35.09 40V14.9h1V40zM38.19 40V18.3h1V40zM41.29 40V8.6h1V40zM44.38 40V7.0h1V40zM47.48 40V8.0h1V40zM50.58 40V13.7h1V40zM53.68 40V22.9h1V40zM56.78 40V13.7h1V40zM59.88 40V20.6h1V40zM62.98 40V19.4h1V40zM66.08 40V13.7h1V40zM69.18 40V19.4h1V40zM72.27 40V24.0h1V40zM75.37 40V16.0h1V40zM78.47 40V21.7h1V40zM81.57 40V18.3h1V40zM84.67 40V25.1h1V40zM87.77 40V17.1h1V40zM90.87 40V22.9h1V40zM93.97 40V12.0h1V40zM97.07 40V20.6h1V40zM100.16 40V21.7h1V40zM103.26 40V19.4h1V40zM106.36 40V14.9h1V40zM109.46 40V25.1h1V40zM112.56 40V21.7h1V40zM115.66 40V27.0h1V40zM118.76 40V22.9h1V40zM121.86 40V13.7h1V40zM124.96 40V7.0h1V40zM128.05 40V25.1h1V40zM131.15 40V4.8h1V40zM134.25 40V21.7h1V40zM137.35 40V30.9h1V40zM140.45 40V21.7h1V40zM143.55 40V18.3h1V40zM146.65 40V16.0h1V40zM149.75 40V20.6h1V40zM152.85 40V20.6h1V40zM155.95 40V16.0h1V40zM159.04 40V14.9h1V40zM162.14 40V22.9h1V40zM165.24 40V22.9h1V40zM168.34 40V33.1h1V40zM171.44 40V11.0h1V40zM174.54 40V21.7h1V40zM177.64 40V17.1h1V40zM180.74 40V15.4h1V40zM183.84 40V14.9h1V40zM186.93 40V18.3h1V40zM190.03 40V1.1h1V40zM193.13 40V12.6h1V40zM196.23 40V21.7h1V40zM199.33 40V19.4h1V40zM202.43 40V22.9h1V40zM205.53 40V17.1h1V40zM208.63 40V12.6h1V40zM211.73 40V18.3h1V40zM214.82 40V17.1h1V40zM217.92 40V7.0h1V40zM221.02 40V18.3h1V40zM224.12 40V21.7h1V40zM227.22 40V16.0h1V40zM230.32 40V27.4h1V40zM233.42 40V20.6h1V40zM236.52 40V19.4h1V40zM239.62 40V14.9h1V40zM242.71 40V24.0h1V40zM245.81 40V19.4h1V40zM248.91 40V14.9h1V40zM252.01 40V18.3h1V40zM255.11 40V11.0h1V40zM258.21 40V14.9h1V40zM261.31 40V19.4h1V40zM264.41 40V24.0h1V40zM267.51 40V12.0h1V40zM270.60 40V18.3h1V40zM273.70 40V18.3h1V40zM276.80 40V29.7h1V40zM279.90 40V22.9h1V40zM283.00 40V21.7h1V40zM286.10 40V27.4h1V40zM289.20 40V16.0h1V40zM292.30 40V16.0h1V40zM295.40 40V24.0h1V40zM298.49 40V20.6h1V40zM301.59 40V30.9h1V40zM304.69 40V14.9h1V40zM307.79 40V20.6h1V40zM310.89 40V16.0h1V40zM313.99 40V21.7h1V40zM317.09 40V21.7h1V40zM320.19 40V22.9h1V40zM323.29 40V18.3h1V40zM326.38 40V25.1h1V40zM329.48 40V26.3h1V40zM332.58 40V18.3h1V40zM335.68 40V24.0h1V40zM338.78 40V14.9h1V40zM341.88 40V17.1h1V40zM344.98 40V19.4h1V40zM348.08 40V12.6h1V40zM351.18 40V22.9h1V40zM354.27 40V19.4h1V40zM357.37 40V27.4h1V40zM360.47 40V21.7h1V40zM363.57 40V12.0h1V40zM366.67 40V13.7h1V40zM369.77 40V21.7h1V40zM372.87 40V28.6h1V40zM375.97 40V17.1h1V40z"/><path d="M2.03 40V14.9h1V40zM5.13 40V18.3h1V40zM8.23 40V14.3h1V40zM11.33 40V19.4h1V40zM14.43 40V18.3h1V40zM17.53 40V13.7h1V40zM20.63 40V13.7h1V40zM23.73 40V26.3h1V40zM26.82 40V21.7h1V40zM29.92 40V29.0h1V40zM33.02 40V16.0h1V40zM36.12 40V19.4h1V40zM39.22 40V20.6h1V40zM42.32 40V17.1h1V40zM45.42 40V16.0h1V40zM48.52 40V25.1h1V40zM51.62 40V19.4h1V40zM54.71 40V17.1h1V40zM57.81 40V22.9h1V40zM60.91 40V19.4h1V40zM64.01 40V11.0h1V40zM67.11 40V21.7h1V40zM70.21 40V25.1h1V40zM73.31 40V16.0h1V40zM76.41 40V15.0h1V40zM79.51 40V24.0h1V40zM82.60 40V18.3h1V40zM85.70 40V24.0h1V40zM88.80 40V16.0h1V40zM91.90 40V13.7h1V40zM95.00 40V14.3h1V40zM98.10 40V20.6h1V40zM101.20 40V20.6h1V40zM104.30 40V17.1h1V40zM107.40 40V13.7h1V40zM110.49 40V16.0h1V40zM113.59 40V22.9h1V40zM116.69 40V19.4h1V40zM119.79 40V13.1h1V40zM122.89 40V21.7h1V40zM125.99 40V25.1h1V40zM129.09 40V14.3h1V40zM132.19 40V28.6h1V40zM135.29 40V26.3h1V40zM138.38 40V24.0h1V40zM141.48 40V20.6h1V40zM144.58 40V12.6h1V40zM147.68 40V8.0h1V40zM150.78 40V17.1h1V40zM153.88 40V18.3h1V40zM156.98 40V12.6h1V40zM160.08 40V18.3h1V40zM163.18 40V24.0h1V40zM166.27 40V17.1h1V40zM169.37 40V14.3h1V40zM172.47 40V29.7h1V40zM175.57 40V16.0h1V40zM178.67 40V17.1h1V40zM181.77 40V27.4h1V40zM184.87 40V6.0h1V40zM187.97 40V24.0h1V40zM191.07 40V17.1h1V40zM194.16 40V19.4h1V40zM197.26 40V17.1h1V40zM200.36 40V25.1h1V40zM203.46 40V27.4h1V40zM206.56 40V19.4h1V40zM209.66 40V25.1h1V40zM212.76 40V19.4h1V40zM215.86 40V24.0h1V40zM218.96 40V24.0h1V40zM222.05 40V13.7h1V40zM225.15 40V11.0h1V40zM228.25 40V16.0h1V40zM231.35 40V22.9h1V40zM234.45 40V20.6h1V40zM237.55 40V17.1h1V40zM240.65 40V28.6h1V40zM243.75 40V18.3h1V40zM246.85 40V25.1h1V40zM249.95 40V24.0h1V40zM253.04 40V20.6h1V40zM256.14 40V26.3h1V40zM259.24 40V28.6h1V40zM262.34 40V19.4h1V40zM265.44 40V7.0h1V40zM268.54 40V18.3h1V40zM271.64 40V14.9h1V40zM274.74 40V14.9h1V40zM277.84 40V25.1h1V40zM280.93 40V12.6h1V40zM284.03 40V19.4h1V40zM287.13 40V18.3h1V40zM290.23 40V20.6h1V40zM293.33 40V16.0h1V40zM296.43 40V4.8h1V40zM299.53 40V16.0h1V40zM302.63 40V27.4h1V40zM305.73 40V24.0h1V40zM308.82 40V24.0h1V40zM311.92 40V9.5h1V40zM315.02 40V28.6h1V40zM318.12 40V30.9h1V40zM321.22 40V32.0h1V40zM324.32 40V20.6h1V40zM327.42 40V20.6h1V40zM330.52 40V18.3h1V40zM333.62 40V17.1h1V40zM336.71 40V14.3h1V40zM339.81 40V14.3h1V40zM342.91 40V24.0h1V40zM346.01 40V18.3h1V40zM349.11 40V18.3h1V40zM352.21 40V19.4h1V40zM355.31 40V18.3h1V40zM358.41 40V20.6h1V40zM361.51 40V16.0h1V40zM364.60 40V18.3h1V40zM367.70 40V20.6h1V40zM370.80 40V11.0h1V40zM373.90 40V19.4h1V40zM377.00 40V21.7h1V40z"/><path d="M3.07 40V4.8h1V40zM6.16 40V8.0h1V40zM9.26 40V17.1h1V40zM12.36 40V22.9h1V40zM15.46 40V24.0h1V40zM18.56 40V3.7h1V40zM21.66 40V15.4h1V40zM24.76 40V13.1h1V40zM27.86 40V7.0h1V40zM30.96 40V12.6h1V40zM34.05 40V12.0h1V40zM37.15 40V29.7h1V40zM40.25 40V21.7h1V40zM43.35 40V26.3h1V40zM46.45 40V21.7h1V40zM49.55 40V18.3h1V40zM52.65 40V12.6h1V40zM55.75 40V18.3h1V40zM58.85 40V20.6h1V40zM61.95 40V12.6h1V40zM65.04 40V24.0h1V40zM68.14 40V17.1h1V40zM71.24 40V18.3h1V40zM74.34 40V32.2h1V40zM77.44 40V11.0h1V40zM80.54 40V15.4h1V40zM83.64 40V25.1h1V40zM86.74 40V2.7h1V40zM89.84 40V20.6h1V40zM92.93 40V18.3h1V40zM96.03 40V18.3h1V40zM99.13 40V25.1h1V40zM102.23 40V19.4h1V40zM105.33 40V6.0h1V40zM108.43 40V17.1h1V40zM111.53 40V25.1h1V40zM114.63 40V16.0h1V40zM117.73 40V17.1h1V40zM120.82 40V20.6h1V40zM123.92 40V17.1h1V40zM127.02 40V19.4h1V40zM130.12 40V20.6h1V40zM133.22 40V27.0h1V40zM136.32 40V2.3h1V40zM139.42 40V21.7h1V40zM142.52 40V12.0h1V40zM145.62 40V22.9h1V40zM148.71 40V22.9h1V40zM151.81 40V15.4h1V40zM154.91 40V14.9h1V40zM158.01 40V16.0h1V40zM161.11 40V4.8h1V40zM164.21 40V13.1h1V40zM167.31 40V25.1h1V40zM170.41 40V21.7h1V40zM173.51 40V14.9h1V40zM176.60 40V17.1h1V40zM179.70 40V20.6h1V40zM182.80 40V15.4h1V40zM185.90 40V19.4h1V40zM189.00 40V27.4h1V40zM192.10 40V21.7h1V40zM195.20 40V21.7h1V40zM198.30 40V16.0h1V40zM201.40 40V14.9h1V40zM204.49 40V16.0h1V40zM207.59 40V26.0h1V40zM210.69 40V12.6h1V40zM213.79 40V21.7h1V40zM216.89 40V22.9h1V40zM219.99 40V27.4h1V40zM223.09 40V27.4h1V40zM226.19 40V16.1h1V40zM229.29 40V16.0h1V40zM232.38 40V20.6h1V40zM235.48 40V12.6h1V40zM238.58 40V18.3h1V40zM241.68 40V17.1h1V40zM244.78 40V12.6h1V40zM247.88 40V13.1h1V40zM250.98 40V16.0h1V40zM254.08 40V26.0h1V40zM257.18 40V12.0h1V40zM260.27 40V20.6h1V40zM263.37 40V16.0h1V40zM266.47 40V18.3h1V40zM269.57 40V14.3h1V40zM272.67 40V16.0h1V40zM275.77 40V20.6h1V40zM278.87 40V12.0h1V40zM281.97 40V17.1h1V40zM285.07 40V25.1h1V40zM288.16 40V14.3h1V40zM291.26 40V9.4h1V40zM294.36 40V20.6h1V40zM297.46 40V19.4h1V40zM300.56 40V27.0h1V40zM303.66 40V17.1h1V40zM306.76 40V7.0h1V40zM309.86 40V22.9h1V40zM312.96 40V22.9h1V40zM316.05 40V18.3h1V40zM319.15 40V8.6h1V40zM322.25 40V21.7h1V40zM325.35 40V19.4h1V40zM328.45 40V12.0h1V40zM331.55 40V16.0h1V40zM334.65 40V26.3h1V40zM337.75 40V24.0h1V40zM340.85 40V19.4h1V40zM343.95 40V18.3h1V40zM347.04 40V25.1h1V40zM350.14 40V30.0h1V40zM353.24 40V16.0h1V40zM356.34 40V17.1h1V40zM359.44 40V21.7h1V40zM362.54 40V3.7h1V40zM365.64 40V16.0h1V40zM368.74 40V15.4h1V40zM371.84 40V16.0h1V40zM374.93 40V21.7h1V40z"/></g></svg></div><div class="c c5"><span class="tri-r"></span><svg class="ic k" width="14" height="14" viewBox="0 0 14 14"><path fill="#1b981b" transform="translate(.15 -.15)" d="M.5 7.9 1.6 7 4.1 9.9C6.2 6.1 8.9 2.9 12.2.5L12.5.9C9.7 3.700 7.100 7.500 5 11.9L3.900 12.100C3 10.400 1.800 9 .5 7.900z"/></svg><span class="lab p">PASS (2)</span></div></div>
<div class="tr row s"><div class="c c1">Meropenem</div><div class="c c2">Broad</div><div class="c c3">19</div><div class="c c4"><svg class="spark" width="380" height="41" viewBox="0 0 380 41" fill="#008080"><g><path d="M1.00 40V26.0h1V40zM4.10 40V22.0h1V40zM7.20 40V26.0h1V40zM10.30 40V16.0h1V40zM13.40 40V24.0h1V40zM16.49 40V28.0h1V40zM19.59 40V24.0h1V40zM22.69 40V20.0h1V40zM25.79 40V26.0h1V40zM28.89 40V16.0h1V40zM31.99 40V12.2h1V40zM35.09 40V24.0h1V40zM38.19 40V20.0h1V40zM41.29 40V20.0h1V40zM44.38 40V30.0h1V40zM47.48 40V16.0h1V40zM50.58 40V26.0h1V40zM53.68 40V18.0h1V40zM56.78 40V33.3h1V40zM59.88 40V21.0h1V40zM62.98 40V16.0h1V40zM66.08 40V22.0h1V40zM69.18 40V32.0h1V40zM72.27 40V8.6h1V40zM75.37 40V30.0h1V40zM78.47 40V30.0h1V40zM81.57 40V24.0h1V40zM84.67 40V16.0h1V40zM87.77 40V24.0h1V40zM90.87 40V16.0h1V40zM93.97 40V20.0h1V40zM97.07 40V24.0h1V40zM100.16 40V22.0h1V40zM103.26 40V19.0h1V40zM106.36 40V17.0h1V40zM109.46 40V20.0h1V40zM112.56 40V20.0h1V40zM115.66 40V15.0h1V40zM118.76 40V32.0h1V40zM121.86 40V26.0h1V40zM124.96 40V24.0h1V40zM128.05 40V26.0h1V40zM131.15 40V19.0h1V40zM134.25 40V35.4h1V40zM137.35 40V26.0h1V40zM140.45 40V24.0h1V40zM143.55 40V15.0h1V40zM146.65 40V20.0h1V40zM149.75 40V18.0h1V40zM152.85 40V28.0h1V40zM155.95 40V10.7h1V40zM159.04 40V28.0h1V40zM162.14 40V20.0h1V40zM165.24 40V32.0h1V40zM168.34 40V15.0h1V40zM171.44 40V20.0h1V40zM174.54 40V24.0h1V40zM177.64 40V26.0h1V40zM180.74 40V22.0h1V40zM183.84 40V20.0h1V40zM186.93 40V22.0h1V40zM190.03 40V15.0h1V40zM193.13 40V21.0h1V40zM196.23 40V16.0h1V40zM199.33 40V30.0h1V40zM202.43 40V18.0h1V40zM205.53 40V20.0h1V40zM208.63 40V28.0h1V40zM211.73 40V24.0h1V40zM214.82 40V28.0h1V40zM217.92 40V17.0h1V40zM221.02 40V32.0h1V40zM224.12 40V22.0h1V40zM227.22 40V18.0h1V40zM230.32 40V20.0h1V40zM233.42 40V8.6h1V40zM236.52 40V26.0h1V40zM239.62 40V30.0h1V40zM242.71 40V21.0h1V40zM245.81 40V24.0h1V40zM248.91 40V20.0h1V40zM252.01 40V24.0h1V40zM255.11 40V24.0h1V40zM258.21 40V28.0h1V40zM261.31 40V30.0h1V40zM264.41 40V28.0h1V40zM267.51 40V26.0h1V40zM270.60 40V16.0h1V40zM273.70 40V15.0h1V40zM276.80 40V22.0h1V40zM279.90 40V26.0h1V40zM283.00 40V26.0h1V40zM286.10 40V30.0h1V40zM289.20 40V20.0h1V40zM292.30 40V24.0h1V40zM295.40 40V26.0h1V40zM298.49 40V20.0h1V40zM301.59 40V26.0h1V40zM304.69 40V30.0h1V40zM307.79 40V22.0h1V40zM310.89 40V18.0h1V40zM313.99 40V30.0h1V40zM317.09 40V21.0h1V40zM320.19 40V30.0h1V40zM323.29 40V19.0h1V40zM326.38 40V18.0h1V40zM329.48 40V24.0h1V40zM332.58 40V28.0h1V40zM335.68 40V4.0h1V40zM338.78 40V26.0h1V40zM341.88 40V24.0h1V40zM344.98 40V26.0h1V40zM348.08 40V30.0h1V40zM351.18 40V20.0h1V40zM354.27 40V17.0h1V40zM357.37 40V18.0h1V40zM360.47 40V30.0h1V40zM363.57 40V26.0h1V40zM366.67 40V30.0h1V40zM369.77 40V24.0h1V40zM372.87 40V17.0h1V40zM375.97 40V32.0h1V40z"/><path d="M2.03 40V32.0h1V40zM5.13 40V20.0h1V40zM8.23 40V20.0h1V40zM11.33 40V22.0h1V40zM14.43 40V22.0h1V40zM17.53 40V30.0h1V40zM20.63 40V24.0h1V40zM23.73 40V20.0h1V40zM26.82 40V18.0h1V40zM29.92 40V26.0h1V40zM33.02 40V21.0h1V40zM36.12 40V28.0h1V40zM39.22 40V26.0h1V40zM42.32 40V36.0h1V40zM45.42 40V16.0h1V40zM48.52 40V28.0h1V40zM51.62 40V28.0h1V40zM54.71 40V16.0h1V40zM57.81 40V26.0h1V40zM60.91 40V28.0h1V40zM64.01 40V20.0h1V40zM67.11 40V34.0h1V40zM70.21 40V20.0h1V40zM73.31 40V26.0h1V40zM76.41 40V28.0h1V40zM79.51 40V30.0h1V40zM82.60 40V24.0h1V40zM85.70 40V30.0h1V40zM88.80 40V17.0h1V40zM91.90 40V8.6h1V40zM95.00 40V32.0h1V40zM98.10 40V24.0h1V40zM101.20 40V26.0h1V40zM104.30 40V26.0h1V40zM107.40 40V20.0h1V40zM110.49 40V18.0h1V40zM113.59 40V22.0h1V40zM116.69 40V26.0h1V40zM119.79 40V20.0h1V40zM122.89 40V18.0h1V40zM125.99 40V18.0h1V40zM129.09 40V20.0h1V40zM132.19 40V26.0h1V40zM135.29 40V22.0h1V40zM138.38 40V8.6h1V40zM141.48 40V22.0h1V40zM144.58 40V26.0h1V40zM147.68 40V19.0h1V40zM150.78 40V24.0h1V40zM153.88 40V18.0h1V40zM156.98 40V24.0h1V40zM160.08 40V28.0h1V40zM163.18 40V33.0h1V40zM166.27 40V28.0h1V40zM169.37 40V26.0h1V40zM172.47 40V32.0h1V40zM175.57 40V24.0h1V40zM178.67 40V20.0h1V40zM181.77 40V22.0h1V40zM184.87 40V13.0h1V40zM187.97 40V20.0h1V40zM191.07 40V20.0h1V40zM194.16 40V20.0h1V40zM197.26 40V18.0h1V40zM200.36 40V18.0h1V40zM203.46 40V18.0h1V40zM206.56 40V30.0h1V40zM209.66 40V26.0h1V40zM212.76 40V26.0h1V40zM215.86 40V18.0h1V40zM218.96 40V28.0h1V40zM222.05 40V20.0h1V40zM225.15 40V18.0h1V40zM228.25 40V13.0h1V40zM231.35 40V24.0h1V40zM234.45 40V17.0h1V40zM237.55 40V22.0h1V40zM240.65 40V24.0h1V40zM243.75 40V20.0h1V40zM246.85 40V18.0h1V40zM249.95 40V20.0h1V40zM253.04 40V26.0h1V40zM256.14 40V26.0h1V40zM259.24 40V16.0h1V40zM262.34 40V8.6h1V40zM265.44 40V22.0h1V40zM268.54 40V24.0h1V40zM271.64 40V18.0h1V40zM274.74 40V22.0h1V40zM277.84 40V26.0h1V40zM280.93 40V28.0h1V40zM284.03 40V17.0h1V40zM287.13 40V24.0h1V40zM290.23 40V21.0h1V40zM293.33 40V26.0h1V40zM296.43 40V26.0h1V40zM299.53 40V36.0h1V40zM302.63 40V20.0h1V40zM305.73 40V24.0h1V40zM308.82 40V28.0h1V40zM311.92 40V30.0h1V40zM315.02 40V26.0h1V40zM318.12 40V30.0h1V40zM321.22 40V26.0h1V40zM324.32 40V22.0h1V40zM327.42 40V15.0h1V40zM330.52 40V32.0h1V40zM333.62 40V26.0h1V40zM336.71 40V16.0h1V40zM339.81 40V24.0h1V40zM342.91 40V20.0h1V40zM346.01 40V18.0h1V40zM349.11 40V24.0h1V40zM352.21 40V20.0h1V40zM355.31 40V19.0h1V40zM358.41 40V24.0h1V40zM361.51 40V24.0h1V40zM364.60 40V26.0h1V40zM367.70 40V22.0h1V40zM370.80 40V28.0h1V40zM373.90 40V32.0h1V40zM377.00 40V24.0h1V40z"/><path d="M3.07 40V18.0h1V40zM6.16 40V16.0h1V40zM9.26 40V24.0h1V40zM12.36 40V18.0h1V40zM15.46 40V28.0h1V40zM18.56 40V22.0h1V40zM21.66 40V32.0h1V40zM24.76 40V26.0h1V40zM27.86 40V18.0h1V40zM30.96 40V26.0h1V40zM34.05 40V22.0h1V40zM37.15 40V2.0h1V40zM40.25 40V34.0h1V40zM43.35 40V19.0h1V40zM46.45 40V26.0h1V40zM49.55 40V24.0h1V40zM52.65 40V22.0h1V40zM55.75 40V20.0h1V40zM58.85 40V24.0h1V40zM61.95 40V18.0h1V40zM65.04 40V30.0h1V40zM68.14 40V34.0h1V40zM71.24 40V24.0h1V40zM74.34 40V34.0h1V40zM77.44 40V22.0h1V40zM80.54 40V8.6h1V40zM83.64 40V32.0h1V40zM86.74 40V28.0h1V40zM89.84 40V24.0h1V40zM92.93 40V30.0h1V40zM96.03 40V20.0h1V40zM99.13 40V26.0h1V40zM102.23 40V19.0h1V40zM105.33 40V15.0h1V40zM108.43 40V26.0h1V40zM111.53 40V16.0h1V40zM114.63 40V15.0h1V40zM117.73 40V22.0h1V40zM120.82 40V12.2h1V40zM123.92 40V26.0h1V40zM127.02 40V22.0h1V40zM130.12 40V21.0h1V40zM133.22 40V21.0h1V40zM136.32 40V30.0h1V40zM139.42 40V26.0h1V40zM142.52 40V26.0h1V40zM145.62 40V18.0h1V40zM148.71 40V26.0h1V40zM151.81 40V24.0h1V40zM154.91 40V28.0h1V40zM158.01 40V22.0h1V40zM161.11 40V22.0h1V40zM164.21 40V30.0h1V40zM167.31 40V20.0h1V40zM170.41 40V22.0h1V40zM173.51 40V28.0h1V40zM176.60 40V20.0h1V40zM179.70 40V20.0h1V40zM182.80 40V28.0h1V40zM185.90 40V19.0h1V40zM189.00 40V21.0h1V40zM192.10 40V18.0h1V40zM195.20 40V20.0h1V40zM198.30 40V24.0h1V40zM201.40 40V20.0h1V40zM204.49 40V22.0h1V40zM207.59 40V24.0h1V40zM210.69 40V18.0h1V40zM213.79 40V30.0h1V40zM216.89 40V28.0h1V40zM219.99 40V24.0h1V40zM223.09 40V22.0h1V40zM226.19 40V20.0h1V40zM229.29 40V24.0h1V40zM232.38 40V20.0h1V40zM235.48 40V28.0h1V40zM238.58 40V18.0h1V40zM241.68 40V16.0h1V40zM244.78 40V22.0h1V40zM247.88 40V15.0h1V40zM250.98 40V8.6h1V40zM254.08 40V18.0h1V40zM257.18 40V22.0h1V40zM260.27 40V28.0h1V40zM263.37 40V20.0h1V40zM266.47 40V20.0h1V40zM269.57 40V20.0h1V40zM272.67 40V32.0h1V40zM275.77 40V24.0h1V40zM278.87 40V24.0h1V40zM281.97 40V20.0h1V40zM285.07 40V26.0h1V40zM288.16 40V16.0h1V40zM291.26 40V32.0h1V40zM294.36 40V20.0h1V40zM297.46 40V20.0h1V40zM300.56 40V17.0h1V40zM303.66 40V26.0h1V40zM306.76 40V22.0h1V40zM309.86 40V24.0h1V40zM312.96 40V18.0h1V40zM316.05 40V22.0h1V40zM319.15 40V32.0h1V40zM322.25 40V28.0h1V40zM325.35 40V28.0h1V40zM328.45 40V24.0h1V40zM331.55 40V24.0h1V40zM334.65 40V20.0h1V40zM337.75 40V24.0h1V40zM340.85 40V28.0h1V40zM343.95 40V16.0h1V40zM347.04 40V19.0h1V40zM350.14 40V20.0h1V40zM353.24 40V34.0h1V40zM356.34 40V22.0h1V40zM359.44 40V28.0h1V40zM362.54 40V20.0h1V40zM365.64 40V26.0h1V40zM368.74 40V19.0h1V40zM371.84 40V32.0h1V40zM374.93 40V16.0h1V40z"/></g><g><path d="M1.00 40V26.0h1V40zM4.10 40V22.0h1V40zM7.20 40V26.0h1V40zM10.30 40V16.0h1V40zM13.40 40V24.0h1V40zM16.49 40V28.0h1V40zM19.59 40V24.0h1V40zM22.69 40V20.0h1V40zM25.79 40V26.0h1V40zM28.89 40V16.0h1V40zM31.99 40V12.2h1V40zM35.09 40V24.0h1V40zM38.19 40V20.0h1V40zM41.29 40V20.0h1V40zM44.38 40V30.0h1V40zM47.48 40V16.0h1V40zM50.58 40V26.0h1V40zM53.68 40V18.0h1V40zM56.78 40V33.3h1V40zM59.88 40V21.0h1V40zM62.98 40V16.0h1V40zM66.08 40V22.0h1V40zM69.18 40V32.0h1V40zM72.27 40V8.6h1V40zM75.37 40V30.0h1V40zM78.47 40V30.0h1V40zM81.57 40V24.0h1V40zM84.67 40V16.0h1V40zM87.77 40V24.0h1V40zM90.87 40V16.0h1V40zM93.97 40V20.0h1V40zM97.07 40V24.0h1V40zM100.16 40V22.0h1V40zM103.26 40V19.0h1V40zM106.36 40V17.0h1V40zM109.46 40V20.0h1V40zM112.56 40V20.0h1V40zM115.66 40V15.0h1V40zM118.76 40V32.0h1V40zM121.86 40V26.0h1V40zM124.96 40V24.0h1V40zM128.05 40V26.0h1V40zM131.15 40V19.0h1V40zM134.25 40V35.4h1V40zM137.35 40V26.0h1V40zM140.45 40V24.0h1V40zM143.55 40V15.0h1V40zM146.65 40V20.0h1V40zM149.75 40V18.0h1V40zM152.85 40V28.0h1V40zM155.95 40V10.7h1V40zM159.04 40V28.0h1V40zM162.14 40V20.0h1V40zM165.24 40V32.0h1V40zM168.34 40V15.0h1V40zM171.44 40V20.0h1V40zM174.54 40V24.0h1V40zM177.64 40V26.0h1V40zM180.74 40V22.0h1V40zM183.84 40V20.0h1V40zM186.93 40V22.0h1V40zM190.03 40V15.0h1V40zM193.13 40V21.0h1V40zM196.23 40V16.0h1V40zM199.33 40V30.0h1V40zM202.43 40V18.0h1V40zM205.53 40V20.0h1V40zM208.63 40V28.0h1V40zM211.73 40V24.0h1V40zM214.82 40V28.0h1V40zM217.92 40V17.0h1V40zM221.02 40V32.0h1V40zM224.12 40V22.0h1V40zM227.22 40V18.0h1V40zM230.32 40V20.0h1V40zM233.42 40V8.6h1V40zM236.52 40V26.0h1V40zM239.62 40V30.0h1V40zM242.71 40V21.0h1V40zM245.81 40V24.0h1V40zM248.91 40V20.0h1V40zM252.01 40V24.0h1V40zM255.11 40V24.0h1V40zM258.21 40V28.0h1V40zM261.31 40V30.0h1V40zM264.41 40V28.0h1V40zM267.51 40V26.0h1V40zM270.60 40V16.0h1V40zM273.70 40V15.0h1V40zM276.80 40V22.0h1V40zM279.90 40V26.0h1V40zM283.00 40V26.0h1V40zM286.10 40V30.0h1V40zM289.20 40V20.0h1V40zM292.30 40V24.0h1V40zM295.40 40V26.0h1V40zM298.49 40V20.0h1V40zM301.59 40V26.0h1V40zM304.69 40V30.0h1V40zM307.79 40V22.0h1V40zM310.89 40V18.0h1V40zM313.99 40V30.0h1V40zM317.09 40V21.0h1V40zM320.19 40V30.0h1V40zM323.29 40V19.0h1V40zM326.38 40V18.0h1V40zM329.48 40V24.0h1V40zM332.58 40V28.0h1V40zM335.68 40V4.0h1V40zM338.78 40V26.0h1V40zM341.88 40V24.0h1V40zM344.98 40V26.0h1V40zM348.08 40V30.0h1V40zM351.18 40V20.0h1V40zM354.27 40V17.0h1V40zM357.37 40V18.0h1V40zM360.47 40V30.0h1V40zM363.57 40V26.0h1V40zM366.67 40V30.0h1V40zM369.77 40V24.0h1V40zM372.87 40V17.0h1V40zM375.97 40V32.0h1V40z"/><path d="M2.03 40V32.0h1V40zM5.13 40V20.0h1V40zM8.23 40V20.0h1V40zM11.33 40V22.0h1V40zM14.43 40V22.0h1V40zM17.53 40V30.0h1V40zM20.63 40V24.0h1V40zM23.73 40V20.0h1V40zM26.82 40V18.0h1V40zM29.92 40V26.0h1V40zM33.02 40V21.0h1V40zM36.12 40V28.0h1V40zM39.22 40V26.0h1V40zM42.32 40V36.0h1V40zM45.42 40V16.0h1V40zM48.52 40V28.0h1V40zM51.62 40V28.0h1V40zM54.71 40V16.0h1V40zM57.81 40V26.0h1V40zM60.91 40V28.0h1V40zM64.01 40V20.0h1V40zM67.11 40V34.0h1V40zM70.21 40V20.0h1V40zM73.31 40V26.0h1V40zM76.41 40V28.0h1V40zM79.51 40V30.0h1V40zM82.60 40V24.0h1V40zM85.70 40V30.0h1V40zM88.80 40V17.0h1V40zM91.90 40V8.6h1V40zM95.00 40V32.0h1V40zM98.10 40V24.0h1V40zM101.20 40V26.0h1V40zM104.30 40V26.0h1V40zM107.40 40V20.0h1V40zM110.49 40V18.0h1V40zM113.59 40V22.0h1V40zM116.69 40V26.0h1V40zM119.79 40V20.0h1V40zM122.89 40V18.0h1V40zM125.99 40V18.0h1V40zM129.09 40V20.0h1V40zM132.19 40V26.0h1V40zM135.29 40V22.0h1V40zM138.38 40V8.6h1V40zM141.48 40V22.0h1V40zM144.58 40V26.0h1V40zM147.68 40V19.0h1V40zM150.78 40V24.0h1V40zM153.88 40V18.0h1V40zM156.98 40V24.0h1V40zM160.08 40V28.0h1V40zM163.18 40V33.0h1V40zM166.27 40V28.0h1V40zM169.37 40V26.0h1V40zM172.47 40V32.0h1V40zM175.57 40V24.0h1V40zM178.67 40V20.0h1V40zM181.77 40V22.0h1V40zM184.87 40V13.0h1V40zM187.97 40V20.0h1V40zM191.07 40V20.0h1V40zM194.16 40V20.0h1V40zM197.26 40V18.0h1V40zM200.36 40V18.0h1V40zM203.46 40V18.0h1V40zM206.56 40V30.0h1V40zM209.66 40V26.0h1V40zM212.76 40V26.0h1V40zM215.86 40V18.0h1V40zM218.96 40V28.0h1V40zM222.05 40V20.0h1V40zM225.15 40V18.0h1V40zM228.25 40V13.0h1V40zM231.35 40V24.0h1V40zM234.45 40V17.0h1V40zM237.55 40V22.0h1V40zM240.65 40V24.0h1V40zM243.75 40V20.0h1V40zM246.85 40V18.0h1V40zM249.95 40V20.0h1V40zM253.04 40V26.0h1V40zM256.14 40V26.0h1V40zM259.24 40V16.0h1V40zM262.34 40V8.6h1V40zM265.44 40V22.0h1V40zM268.54 40V24.0h1V40zM271.64 40V18.0h1V40zM274.74 40V22.0h1V40zM277.84 40V26.0h1V40zM280.93 40V28.0h1V40zM284.03 40V17.0h1V40zM287.13 40V24.0h1V40zM290.23 40V21.0h1V40zM293.33 40V26.0h1V40zM296.43 40V26.0h1V40zM299.53 40V36.0h1V40zM302.63 40V20.0h1V40zM305.73 40V24.0h1V40zM308.82 40V28.0h1V40zM311.92 40V30.0h1V40zM315.02 40V26.0h1V40zM318.12 40V30.0h1V40zM321.22 40V26.0h1V40zM324.32 40V22.0h1V40zM327.42 40V15.0h1V40zM330.52 40V32.0h1V40zM333.62 40V26.0h1V40zM336.71 40V16.0h1V40zM339.81 40V24.0h1V40zM342.91 40V20.0h1V40zM346.01 40V18.0h1V40zM349.11 40V24.0h1V40zM352.21 40V20.0h1V40zM355.31 40V19.0h1V40zM358.41 40V24.0h1V40zM361.51 40V24.0h1V40zM364.60 40V26.0h1V40zM367.70 40V22.0h1V40zM370.80 40V28.0h1V40zM373.90 40V32.0h1V40zM377.00 40V24.0h1V40z"/><path d="M3.07 40V18.0h1V40zM6.16 40V16.0h1V40zM9.26 40V24.0h1V40zM12.36 40V18.0h1V40zM15.46 40V28.0h1V40zM18.56 40V22.0h1V40zM21.66 40V32.0h1V40zM24.76 40V26.0h1V40zM27.86 40V18.0h1V40zM30.96 40V26.0h1V40zM34.05 40V22.0h1V40zM37.15 40V2.0h1V40zM40.25 40V34.0h1V40zM43.35 40V19.0h1V40zM46.45 40V26.0h1V40zM49.55 40V24.0h1V40zM52.65 40V22.0h1V40zM55.75 40V20.0h1V40zM58.85 40V24.0h1V40zM61.95 40V18.0h1V40zM65.04 40V30.0h1V40zM68.14 40V34.0h1V40zM71.24 40V24.0h1V40zM74.34 40V34.0h1V40zM77.44 40V22.0h1V40zM80.54 40V8.6h1V40zM83.64 40V32.0h1V40zM86.74 40V28.0h1V40zM89.84 40V24.0h1V40zM92.93 40V30.0h1V40zM96.03 40V20.0h1V40zM99.13 40V26.0h1V40zM102.23 40V19.0h1V40zM105.33 40V15.0h1V40zM108.43 40V26.0h1V40zM111.53 40V16.0h1V40zM114.63 40V15.0h1V40zM117.73 40V22.0h1V40zM120.82 40V12.2h1V40zM123.92 40V26.0h1V40zM127.02 40V22.0h1V40zM130.12 40V21.0h1V40zM133.22 40V21.0h1V40zM136.32 40V30.0h1V40zM139.42 40V26.0h1V40zM142.52 40V26.0h1V40zM145.62 40V18.0h1V40zM148.71 40V26.0h1V40zM151.81 40V24.0h1V40zM154.91 40V28.0h1V40zM158.01 40V22.0h1V40zM161.11 40V22.0h1V40zM164.21 40V30.0h1V40zM167.31 40V20.0h1V40zM170.41 40V22.0h1V40zM173.51 40V28.0h1V40zM176.60 40V20.0h1V40zM179.70 40V20.0h1V40zM182.80 40V28.0h1V40zM185.90 40V19.0h1V40zM189.00 40V21.0h1V40zM192.10 40V18.0h1V40zM195.20 40V20.0h1V40zM198.30 40V24.0h1V40zM201.40 40V20.0h1V40zM204.49 40V22.0h1V40zM207.59 40V24.0h1V40zM210.69 40V18.0h1V40zM213.79 40V30.0h1V40zM216.89 40V28.0h1V40zM219.99 40V24.0h1V40zM223.09 40V22.0h1V40zM226.19 40V20.0h1V40zM229.29 40V24.0h1V40zM232.38 40V20.0h1V40zM235.48 40V28.0h1V40zM238.58 40V18.0h1V40zM241.68 40V16.0h1V40zM244.78 40V22.0h1V40zM247.88 40V15.0h1V40zM250.98 40V8.6h1V40zM254.08 40V18.0h1V40zM257.18 40V22.0h1V40zM260.27 40V28.0h1V40zM263.37 40V20.0h1V40zM266.47 40V20.0h1V40zM269.57 40V20.0h1V40zM272.67 40V32.0h1V40zM275.77 40V24.0h1V40zM278.87 40V24.0h1V40zM281.97 40V20.0h1V40zM285.07 40V26.0h1V40zM288.16 40V16.0h1V40zM291.26 40V32.0h1V40zM294.36 40V20.0h1V40zM297.46 40V20.0h1V40zM300.56 40V17.0h1V40zM303.66 40V26.0h1V40zM306.76 40V22.0h1V40zM309.86 40V24.0h1V40zM312.96 40V18.0h1V40zM316.05 40V22.0h1V40zM319.15 40V32.0h1V40zM322.25 40V28.0h1V40zM325.35 40V28.0h1V40zM328.45 40V24.0h1V40zM331.55 40V24.0h1V40zM334.65 40V20.0h1V40zM337.75 40V24.0h1V40zM340.85 40V28.0h1V40zM343.95 40V16.0h1V40zM347.04 40V19.0h1V40zM350.14 40V20.0h1V40zM353.24 40V34.0h1V40zM356.34 40V22.0h1V40zM359.44 40V28.0h1V40zM362.54 40V20.0h1V40zM365.64 40V26.0h1V40zM368.74 40V19.0h1V40zM371.84 40V32.0h1V40zM374.93 40V16.0h1V40z"/></g></svg></div><div class="c c5"><span class="tri-r"></span><svg class="ic k" width="14" height="14" viewBox="0 0 14 14"><path fill="#1b981b" transform="translate(.15 -.15)" d="M.5 7.9 1.6 7 4.1 9.9C6.2 6.1 8.9 2.9 12.2.5L12.5.9C9.7 3.700 7.100 7.500 5 11.9L3.900 12.100C3 10.400 1.800 9 .5 7.900z"/></svg><span class="lab p">PASS (2)</span></div></div>
<div class="tr row"><div class="c c1">Vancomycin</div><div class="c c2">Limited</div><div class="c c3">3</div><div class="c c4"><svg class="spark" width="380" height="41" viewBox="0 0 380 41" fill="#008080"><g><path d="M16.49 40V30.1h1V40zM19.59 40V20.2h1V40zM28.89 40V30.1h1V40zM35.09 40V30.1h1V40zM53.68 40V30.1h1V40zM59.88 40V20.2h1V40zM66.08 40V30.1h1V40zM69.18 40V30.1h1V40zM72.27 40V30.1h1V40zM75.37 40V30.1h1V40zM78.47 40V30.1h1V40zM87.77 40V30.1h1V40zM90.87 40V30.1h1V40zM93.97 40V30.1h1V40zM100.16 40V30.1h1V40zM109.46 40V30.1h1V40zM115.66 40V30.1h1V40zM121.86 40V20.2h1V40zM134.25 40V20.2h1V40zM137.35 40V30.1h1V40zM143.55 40V30.1h1V40zM146.65 40V30.1h1V40zM149.75 40V20.2h1V40zM168.34 40V20.2h1V40zM276.80 40V20.2h1V40zM279.90 40V30.1h1V40zM289.20 40V30.1h1V40zM301.59 40V30.1h1V40zM307.79 40V30.1h1V40zM313.99 40V30.1h1V40zM329.48 40V30.1h1V40zM335.68 40V30.1h1V40zM344.98 40V30.1h1V40zM363.57 40V30.1h1V40zM366.67 40V30.1h1V40zM369.77 40V30.1h1V40z"/><path d="M8.23 40V30.1h1V40zM14.43 40V20.2h1V40zM17.53 40V30.1h1V40zM20.63 40V30.1h1V40zM33.02 40V30.1h1V40zM39.22 40V30.1h1V40zM42.32 40V30.1h1V40zM45.42 40V30.1h1V40zM60.91 40V30.1h1V40zM64.01 40V30.1h1V40zM67.11 40V30.1h1V40zM73.31 40V30.1h1V40zM76.41 40V30.1h1V40zM79.51 40V30.1h1V40zM82.60 40V30.1h1V40zM88.80 40V30.1h1V40zM91.90 40V30.1h1V40zM107.40 40V30.1h1V40zM116.69 40V30.1h1V40zM122.89 40V30.1h1V40zM132.19 40V30.1h1V40zM166.27 40V30.1h1V40zM274.74 40V30.1h1V40zM287.13 40V20.2h1V40zM318.12 40V30.1h1V40zM327.42 40V30.1h1V40zM339.81 40V30.1h1V40zM342.91 40V30.1h1V40zM367.70 40V30.1h1V40zM373.90 40V30.1h1V40z"/><path d="M9.26 40V30.1h1V40zM15.46 40V30.1h1V40zM18.56 40V30.1h1V40zM30.96 40V30.1h1V40zM55.75 40V30.1h1V40zM61.95 40V10.3h1V40zM65.04 40V30.1h1V40zM68.14 40V20.2h1V40zM71.24 40V30.1h1V40zM74.34 40V30.1h1V40zM77.44 40V20.2h1V40zM80.54 40V30.1h1V40zM83.64 40V30.1h1V40zM86.74 40V30.1h1V40zM99.13 40V20.2h1V40zM123.92 40V30.1h1V40zM145.62 40V30.1h1V40zM161.11 40V30.1h1V40zM167.31 40V10.3h1V40zM170.41 40V30.1h1V40zM281.97 40V30.1h1V40zM291.26 40V30.1h1V40zM294.36 40V10.3h1V40zM300.56 40V30.1h1V40zM306.76 40V30.1h1V40zM316.05 40V30.1h1V40zM325.35 40V30.1h1V40zM331.55 40V30.1h1V40zM343.95 40V30.1h1V40zM347.04 40V30.1h1V40zM356.34 40V20.2h1V40zM359.44 40V30.1h1V40zM362.54 40V30.1h1V40zM365.64 40V30.1h1V40zM371.84 40V30.1h1V40zM374.93 40V30.1h1V40z"/></g><g><path d="M16.49 40V30.1h1V40zM19.59 40V20.2h1V40zM28.89 40V30.1h1V40zM35.09 40V30.1h1V40zM53.68 40V30.1h1V40zM59.88 40V20.2h1V40zM66.08 40V30.1h1V40zM69.18 40V30.1h1V40zM72.27 40V30.1h1V40zM75.37 40V30.1h1V40zM78.47 40V30.1h1V40zM87.77 40V30.1h1V40zM90.87 40V30.1h1V40zM93.97 40V30.1h1V40zM100.16 40V30.1h1V40zM109.46 40V30.1h1V40zM115.66 40V30.1h1V40zM121.86 40V20.2h1V40zM134.25 40V20.2h1V40zM137.35 40V30.1h1V40zM143.55 40V30.1h1V40zM146.65 40V30.1h1V40zM149.75 40V20.2h1V40zM168.34 40V20.2h1V40zM276.80 40V20.2h1V40zM279.90 40V30.1h1V40zM289.20 40V30.1h1V40zM301.59 40V30.1h1V40zM307.79 40V30.1h1V40zM313.99 40V30.1h1V40zM329.48 40V30.1h1V40zM335.68 40V30.1h1V40zM344.98 40V30.1h1V40zM363.57 40V30.1h1V40zM366.67 40V30.1h1V40zM369.77 40V30.1h1V40z"/><path d="M8.23 40V30.1h1V40zM14.43 40V20.2h1V40zM17.53 40V30.1h1V40zM20.63 40V30.1h1V40zM33.02 40V30.1h1V40zM39.22 40V30.1h1V40zM42.32 40V30.1h1V40zM45.42 40V30.1h1V40zM60.91 40V30.1h1V40zM64.01 40V30.1h1V40zM67.11 40V30.1h1V40zM73.31 40V30.1h1V40zM76.41 40V30.1h1V40zM79.51 40V30.1h1V40zM82.60 40V30.1h1V40zM88.80 40V30.1h1V40zM91.90 40V30.1h1V40zM107.40 40V30.1h1V40zM116.69 40V30.1h1V40zM122.89 40V30.1h1V40zM132.19 40V30.1h1V40zM166.27 40V30.1h1V40zM274.74 40V30.1h1V40zM287.13 40V20.2h1V40zM318.12 40V30.1h1V40zM327.42 40V30.1h1V40zM339.81 40V30.1h1V40zM342.91 40V30.1h1V40zM367.70 40V30.1h1V40zM373.90 40V30.1h1V40z"/><path d="M9.26 40V30.1h1V40zM15.46 40V30.1h1V40zM18.56 40V30.1h1V40zM30.96 40V30.1h1V40zM55.75 40V30.1h1V40zM61.95 40V10.3h1V40zM65.04 40V30.1h1V40zM68.14 40V20.2h1V40zM71.24 40V30.1h1V40zM74.34 40V30.1h1V40zM77.44 40V20.2h1V40zM80.54 40V30.1h1V40zM83.64 40V30.1h1V40zM86.74 40V30.1h1V40zM99.13 40V20.2h1V40zM123.92 40V30.1h1V40zM145.62 40V30.1h1V40zM161.11 40V30.1h1V40zM167.31 40V10.3h1V40zM170.41 40V30.1h1V40zM281.97 40V30.1h1V40zM291.26 40V30.1h1V40zM294.36 40V10.3h1V40zM300.56 40V30.1h1V40zM306.76 40V30.1h1V40zM316.05 40V30.1h1V40zM325.35 40V30.1h1V40zM331.55 40V30.1h1V40zM343.95 40V30.1h1V40zM347.04 40V30.1h1V40zM356.34 40V20.2h1V40zM359.44 40V30.1h1V40zM362.54 40V30.1h1V40zM365.64 40V30.1h1V40zM371.84 40V30.1h1V40zM374.93 40V30.1h1V40z"/></g></svg></div><div class="c c5"><span class="tri-d"></span><svg class="ic x" width="14" height="14" viewBox="0 0 14 14"><path fill="#f00" transform="translate(.45 .47)" d="M.45 3.2 3.2 .45 6.5 3.75 9.8 .45 12.55 3.2 9.25 6.5 12.55 9.8 9.8 12.55 6.5 9.25 3.2 12.55 .45 9.8 3.75 6.5z"/></svg><span class="lab">FAIL (2/2)</span></div></div>
<div class="det"><div class="in"><div class="tr h"><div class="a">Rule</div><div class="b">Result</div></div><div class="tr r"><div class="a">At least 1 values are missing in total</div><div class="b">FAIL</div></div><div class="tr r l"><div class="a">Last 7 values are over double the first 7 values</div><div class="b">FAIL</div></div></div></div>
<div class="tr row s"><div class="c c1">Clarithromycin</div><div class="c c2">Broad</div><div class="c c3">16</div><div class="c c4"><svg class="spark" width="380" height="41" viewBox="0 0 380 41" fill="#008080"><g><path d="M1.00 40V21.2h1V40zM4.10 40V28.2h1V40zM7.20 40V25.9h1V40zM10.30 40V21.2h1V40zM13.40 40V16.5h1V40zM16.49 40V18.8h1V40zM19.59 40V28.2h1V40zM22.69 40V25.9h1V40zM25.79 40V21.2h1V40zM28.89 40V7.8h1V40zM31.99 40V21.2h1V40zM35.09 40V25.9h1V40zM38.19 40V21.2h1V40zM41.29 40V30.6h1V40zM44.38 40V28.2h1V40zM47.48 40V28.2h1V40zM50.58 40V32.9h1V40zM53.68 40V21.2h1V40zM56.78 40V18.8h1V40zM59.88 40V25.9h1V40zM62.98 40V23.5h1V40zM66.08 40V16.5h1V40zM69.18 40V21.2h1V40zM72.27 40V28.2h1V40zM75.37 40V23.5h1V40zM78.47 40V23.5h1V40zM81.57 40V21.2h1V40zM84.67 40V25.9h1V40zM87.77 40V18.8h1V40zM90.87 40V30.6h1V40zM93.97 40V30.6h1V40zM97.07 40V18.8h1V40zM100.16 40V28.2h1V40zM103.26 40V18.8h1V40zM106.36 40V30.6h1V40zM109.46 40V28.2h1V40zM112.56 40V25.9h1V40zM115.66 40V21.2h1V40zM118.76 40V21.2h1V40zM121.86 40V28.2h1V40zM124.96 40V28.2h1V40zM128.05 40V28.2h1V40zM131.15 40V7.1h1V40zM134.25 40V25.9h1V40zM137.35 40V23.5h1V40zM140.45 40V14.1h1V40zM143.55 40V30.6h1V40zM146.65 40V30.6h1V40zM149.75 40V28.2h1V40zM152.85 40V18.8h1V40zM155.95 40V23.5h1V40zM159.04 40V18.8h1V40zM162.14 40V11.8h1V40zM165.24 40V28.2h1V40zM168.34 40V18.8h1V40zM171.44 40V14.1h1V40zM174.54 40V32.9h1V40zM177.64 40V21.2h1V40zM180.74 40V23.5h1V40zM183.84 40V30.6h1V40zM186.93 40V18.8h1V40zM190.03 40V23.5h1V40zM193.13 40V32.9h1V40zM196.23 40V7.5h1V40zM199.33 40V23.5h1V40zM202.43 40V25.9h1V40zM205.53 40V23.5h1V40zM208.63 40V21.2h1V40zM211.73 40V25.9h1V40zM214.82 40V21.2h1V40zM217.92 40V23.5h1V40zM221.02 40V7.8h1V40zM224.12 40V23.5h1V40zM227.22 40V16.5h1V40zM230.32 40V23.5h1V40zM233.42 40V7.8h1V40zM236.52 40V28.2h1V40zM239.62 40V25.9h1V40zM242.71 40V21.2h1V40zM245.81 40V28.2h1V40zM248.91 40V16.5h1V40zM252.01 40V28.2h1V40zM255.11 40V23.5h1V40zM258.21 40V18.8h1V40zM261.31 40V23.5h1V40zM264.41 40V35.3h1V40zM267.51 40V25.9h1V40zM270.60 40V18.8h1V40zM273.70 40V10.0h1V40zM276.80 40V30.6h1V40zM279.90 40V32.9h1V40zM283.00 40V32.9h1V40zM286.10 40V21.2h1V40zM289.20 40V32.9h1V40zM292.30 40V28.2h1V40zM295.40 40V18.8h1V40zM298.49 40V21.2h1V40zM301.59 40V28.2h1V40zM304.69 40V18.8h1V40zM307.79 40V18.8h1V40zM310.89 40V28.2h1V40zM313.99 40V16.5h1V40zM317.09 40V35.3h1V40zM320.19 40V18.8h1V40zM323.29 40V23.5h1V40zM326.38 40V23.5h1V40zM329.48 40V10.0h1V40zM332.58 40V25.9h1V40zM335.68 40V35.3h1V40zM338.78 40V16.5h1V40zM341.88 40V16.5h1V40zM344.98 40V25.9h1V40zM348.08 40V18.8h1V40zM351.18 40V32.9h1V40zM354.27 40V23.5h1V40zM357.37 40V28.2h1V40zM360.47 40V28.2h1V40zM363.57 40V32.9h1V40zM366.67 40V14.1h1V40zM369.77 40V18.8h1V40zM372.87 40V11.8h1V40zM375.97 40V16.5h1V40z"/><path d="M2.03 40V18.8h1V40zM5.13 40V30.6h1V40zM8.23 40V7.8h1V40zM11.33 40V25.9h1V40zM14.43 40V23.5h1V40zM17.53 40V28.2h1V40zM20.63 40V23.5h1V40zM23.73 40V18.8h1V40zM26.82 40V11.7h1V40zM29.92 40V25.9h1V40zM33.02 40V30.6h1V40zM36.12 40V16.5h1V40zM39.22 40V18.8h1V40zM42.32 40V25.9h1V40zM45.42 40V23.5h1V40zM48.52 40V23.5h1V40zM51.62 40V21.2h1V40zM54.71 40V23.5h1V40zM57.81 40V23.5h1V40zM60.91 40V21.2h1V40zM64.01 40V28.2h1V40zM67.11 40V23.5h1V40zM70.21 40V30.6h1V40zM73.31 40V23.5h1V40zM76.41 40V23.5h1V40zM79.51 40V16.5h1V40zM82.60 40V23.5h1V40zM85.70 40V16.5h1V40zM88.80 40V25.9h1V40zM91.90 40V9.3h1V40zM95.00 40V23.5h1V40zM98.10 40V30.6h1V40zM101.20 40V30.6h1V40zM104.30 40V30.6h1V40zM107.40 40V21.2h1V40zM110.49 40V16.4h1V40zM113.59 40V23.5h1V40zM116.69 40V4.3h1V40zM119.79 40V16.5h1V40zM122.89 40V25.9h1V40zM125.99 40V21.2h1V40zM129.09 40V25.9h1V40zM132.19 40V28.2h1V40zM135.29 40V25.9h1V40zM138.38 40V28.2h1V40zM141.48 40V30.6h1V40zM144.58 40V18.8h1V40zM147.68 40V32.9h1V40zM150.78 40V25.9h1V40zM153.88 40V23.5h1V40zM156.98 40V21.2h1V40zM160.08 40V28.2h1V40zM163.18 40V18.8h1V40zM166.27 40V14.1h1V40zM169.37 40V18.8h1V40zM172.47 40V23.5h1V40zM175.57 40V14.1h1V40zM178.67 40V18.8h1V40zM181.77 40V14.1h1V40zM184.87 40V9.3h1V40zM187.97 40V14.1h1V40zM191.07 40V14.1h1V40zM194.16 40V28.2h1V40zM197.26 40V21.2h1V40zM200.36 40V16.5h1V40zM203.46 40V23.5h1V40zM206.56 40V23.5h1V40zM209.66 40V18.8h1V40zM212.76 40V14.1h1V40zM215.86 40V14.1h1V40zM218.96 40V25.9h1V40zM222.05 40V21.2h1V40zM225.15 40V21.2h1V40zM228.25 40V18.8h1V40zM231.35 40V16.5h1V40zM234.45 40V23.5h1V40zM237.55 40V23.5h1V40zM240.65 40V14.1h1V40zM243.75 40V21.2h1V40zM246.85 40V23.5h1V40zM249.95 40V23.5h1V40zM253.04 40V25.9h1V40zM256.14 40V14.1h1V40zM259.24 40V28.2h1V40zM262.34 40V14.1h1V40zM265.44 40V23.5h1V40zM268.54 40V25.9h1V40zM271.64 40V16.5h1V40zM274.74 40V18.8h1V40zM277.84 40V11.7h1V40zM280.93 40V28.2h1V40zM284.03 40V21.2h1V40zM287.13 40V21.2h1V40zM290.23 40V30.6h1V40zM293.33 40V16.5h1V40zM296.43 40V14.1h1V40zM299.53 40V25.9h1V40zM302.63 40V21.2h1V40zM305.73 40V23.5h1V40zM308.82 40V16.4h1V40zM311.92 40V25.9h1V40zM315.02 40V23.5h1V40zM318.12 40V25.9h1V40zM321.22 40V28.2h1V40zM324.32 40V23.5h1V40zM327.42 40V21.2h1V40zM330.52 40V32.9h1V40zM333.62 40V28.2h1V40zM336.71 40V16.5h1V40zM339.81 40V21.2h1V40zM342.91 40V14.1h1V40zM346.01 40V23.5h1V40zM349.11 40V21.2h1V40zM352.21 40V35.3h1V40zM355.31 40V32.9h1V40zM358.41 40V23.5h1V40zM361.51 40V25.9h1V40zM364.60 40V18.8h1V40zM367.70 40V21.2h1V40zM370.80 40V35.3h1V40zM373.90 40V18.8h1V40zM377.00 40V35.3h1V40z"/><path d="M3.07 40V28.2h1V40zM6.16 40V18.8h1V40zM9.26 40V21.2h1V40zM12.36 40V30.6h1V40zM15.46 40V25.9h1V40zM18.56 40V28.2h1V40zM21.66 40V25.9h1V40zM24.76 40V21.2h1V40zM27.86 40V28.2h1V40zM30.96 40V32.9h1V40zM34.05 40V30.6h1V40zM37.15 40V25.9h1V40zM40.25 40V18.8h1V40zM43.35 40V35.3h1V40zM46.45 40V25.9h1V40zM49.55 40V7.8h1V40zM52.65 40V18.8h1V40zM55.75 40V21.2h1V40zM58.85 40V25.9h1V40zM61.95 40V18.8h1V40zM65.04 40V16.5h1V40zM68.14 40V25.9h1V40zM71.24 40V25.9h1V40zM74.34 40V16.5h1V40zM77.44 40V21.2h1V40zM80.54 40V14.1h1V40zM83.64 40V28.2h1V40zM86.74 40V7.8h1V40zM89.84 40V25.9h1V40zM92.93 40V21.2h1V40zM96.03 40V16.5h1V40zM99.13 40V21.2h1V40zM102.23 40V30.6h1V40zM105.33 40V16.5h1V40zM108.43 40V25.9h1V40zM111.53 40V23.5h1V40zM114.63 40V23.5h1V40zM117.73 40V21.2h1V40zM120.82 40V11.8h1V40zM123.92 40V18.8h1V40zM127.02 40V21.2h1V40zM130.12 40V28.2h1V40zM133.22 40V23.5h1V40zM136.32 40V2.4h1V40zM139.42 40V18.8h1V40zM142.52 40V21.2h1V40zM145.62 40V21.2h1V40zM148.71 40V30.6h1V40zM151.81 40V4.3h1V40zM154.91 40V23.5h1V40zM158.01 40V28.2h1V40zM161.11 40V28.2h1V40zM164.21 40V25.9h1V40zM167.31 40V30.6h1V40zM170.41 40V16.5h1V40zM173.51 40V21.2h1V40zM176.60 40V18.8h1V40zM179.70 40V23.5h1V40zM182.80 40V11.8h1V40zM185.90 40V23.5h1V40zM189.00 40V21.2h1V40zM192.10 40V14.1h1V40zM195.20 40V21.2h1V40zM198.30 40V28.2h1V40zM201.40 40V23.5h1V40zM204.49 40V14.1h1V40zM207.59 40V28.2h1V40zM210.69 40V14.1h1V40zM213.79 40V21.2h1V40zM216.89 40V28.2h1V40zM219.99 40V25.9h1V40zM223.09 40V28.2h1V40zM226.19 40V28.2h1V40zM229.29 40V23.5h1V40zM232.38 40V14.1h1V40zM235.48 40V21.2h1V40zM238.58 40V25.9h1V40zM241.68 40V32.9h1V40zM244.78 40V18.8h1V40zM247.88 40V25.9h1V40zM250.98 40V23.5h1V40zM254.08 40V23.5h1V40zM257.18 40V11.8h1V40zM260.27 40V28.2h1V40zM263.37 40V35.3h1V40zM266.47 40V21.2h1V40zM269.57 40V35.3h1V40zM272.67 40V30.6h1V40zM275.77 40V25.9h1V40zM278.87 40V14.1h1V40zM281.97 40V23.5h1V40zM285.07 40V18.8h1V40zM288.16 40V18.8h1V40zM291.26 40V32.9h1V40zM294.36 40V21.2h1V40zM297.46 40V18.8h1V40zM300.56 40V18.8h1V40zM303.66 40V11.8h1V40zM306.76 40V21.2h1V40zM309.86 40V18.8h1V40zM312.96 40V28.2h1V40zM316.05 40V23.5h1V40zM319.15 40V14.1h1V40zM322.25 40V28.2h1V40zM325.35 40V21.2h1V40zM328.45 40V30.6h1V40zM331.55 40V25.9h1V40zM334.65 40V5.0h1V40zM337.75 40V35.3h1V40zM340.85 40V14.1h1V40zM343.95 40V21.2h1V40zM347.04 40V10.0h1V40zM350.14 40V21.2h1V40zM353.24 40V11.7h1V40zM356.34 40V16.5h1V40zM359.44 40V21.2h1V40zM362.54 40V30.6h1V40zM365.64 40V16.5h1V40zM368.74 40V28.2h1V40zM371.84 40V14.1h1V40zM374.93 40V25.9h1V40z"/></g><g><path d="M1.00 40V21.2h1V40zM4.10 40V28.2h1V40zM7.20 40V25.9h1V40zM10.30 40V21.2h1V40zM13.40 40V16.5h1V40zM16.49 40V18.8h1V40zM19.59 40V28.2h1V40zM22.69 40V25.9h1V40zM25.79 40V21.2h1V40zM28.89 40V7.8h1V40zM31.99 40V21.2h1V40zM35.09 40V25.9h1V40zM38.19 40V21.2h1V40zM41.29 40V30.6h1V40zM44.38 40V28.2h1V40zM47.48 40V28.2h1V40zM50.58 40V32.9h1V40zM53.68 40V21.2h1V40zM56.78 40V18.8h1V40zM59.88 40V25.9h1V40zM62.98 40V23.5h1V40zM66.08 40V16.5h1V40zM69.18 40V21.2h1V40zM72.27 40V28.2h1V40zM75.37 40V23.5h1V40zM78.47 40V23.5h1V40zM81.57 40V21.2h1V40zM84.67 40V25.9h1V40zM87.77 40V18.8h1V40zM90.87 40V30.6h1V40zM93.97 40V30.6h1V40zM97.07 40V18.8h1V40zM100.16 40V28.2h1V40zM103.26 40V18.8h1V40zM106.36 40V30.6h1V40zM109.46 40V28.2h1V40zM112.56 40V25.9h1V40zM115.66 40V21.2h1V40zM118.76 40V21.2h1V40zM121.86 40V28.2h1V40zM124.96 40V28.2h1V40zM128.05 40V28.2h1V40zM131.15 40V7.1h1V40zM134.25 40V25.9h1V40zM137.35 40V23.5h1V40zM140.45 40V14.1h1V40zM143.55 40V30.6h1V40zM146.65 40V30.6h1V40zM149.75 40V28.2h1V40zM152.85 40V18.8h1V40zM155.95 40V23.5h1V40zM159.04 40V18.8h1V40zM162.14 40V11.8h1V40zM165.24 40V28.2h1V40zM168.34 40V18.8h1V40zM171.44 40V14.1h1V40zM174.54 40V32.9h1V40zM177.64 40V21.2h1V40zM180.74 40V23.5h1V40zM183.84 40V30.6h1V40zM186.93 40V18.8h1V40zM190.03 40V23.5h1V40zM193.13 40V32.9h1V40zM196.23 40V7.5h1V40zM199.33 40V23.5h1V40zM202.43 40V25.9h1V40zM205.53 40V23.5h1V40zM208.63 40V21.2h1V40zM211.73 40V25.9h1V40zM214.82 40V21.2h1V40zM217.92 40V23.5h1V40zM221.02 40V7.8h1V40zM224.12 40V23.5h1V40zM227.22 40V16.5h1V40zM230.32 40V23.5h1V40zM233.42 40V7.8h1V40zM236.52 40V28.2h1V40zM239.62 40V25.9h1V40zM242.71 40V21.2h1V40zM245.81 40V28.2h1V40zM248.91 40V16.5h1V40zM252.01 40V28.2h1V40zM255.11 40V23.5h1V40zM258.21 40V18.8h1V40zM261.31 40V23.5h1V40zM264.41 40V35.3h1V40zM267.51 40V25.9h1V40zM270.60 40V18.8h1V40zM273.70 40V10.0h1V40zM276.80 40V30.6h1V40zM279.90 40V32.9h1V40zM283.00 40V32.9h1V40zM286.10 40V21.2h1V40zM289.20 40V32.9h1V40zM292.30 40V28.2h1V40zM295.40 40V18.8h1V40zM298.49 40V21.2h1V40zM301.59 40V28.2h1V40zM304.69 40V18.8h1V40zM307.79 40V18.8h1V40zM310.89 40V28.2h1V40zM313.99 40V16.5h1V40zM317.09 40V35.3h1V40zM320.19 40V18.8h1V40zM323.29 40V23.5h1V40zM326.38 40V23.5h1V40zM329.48 40V10.0h1V40zM332.58 40V25.9h1V40zM335.68 40V35.3h1V40zM338.78 40V16.5h1V40zM341.88 40V16.5h1V40zM344.98 40V25.9h1V40zM348.08 40V18.8h1V40zM351.18 40V32.9h1V40zM354.27 40V23.5h1V40zM357.37 40V28.2h1V40zM360.47 40V28.2h1V40zM363.57 40V32.9h1V40zM366.67 40V14.1h1V40zM369.77 40V18.8h1V40zM372.87 40V11.8h1V40zM375.97 40V16.5h1V40z"/><path d="M2.03 40V18.8h1V40zM5.13 40V30.6h1V40zM8.23 40V7.8h1V40zM11.33 40V25.9h1V40zM14.43 40V23.5h1V40zM17.53 40V28.2h1V40zM20.63 40V23.5h1V40zM23.73 40V18.8h1V40zM26.82 40V11.7h1V40zM29.92 40V25.9h1V40zM33.02 40V30.6h1V40zM36.12 40V16.5h1V40zM39.22 40V18.8h1V40zM42.32 40V25.9h1V40zM45.42 40V23.5h1V40zM48.52 40V23.5h1V40zM51.62 40V21.2h1V40zM54.71 40V23.5h1V40zM57.81 40V23.5h1V40zM60.91 40V21.2h1V40zM64.01 40V28.2h1V40zM67.11 40V23.5h1V40zM70.21 40V30.6h1V40zM73.31 40V23.5h1V40zM76.41 40V23.5h1V40zM79.51 40V16.5h1V40zM82.60 40V23.5h1V40zM85.70 40V16.5h1V40zM88.80 40V25.9h1V40zM91.90 40V9.3h1V40zM95.00 40V23.5h1V40zM98.10 40V30.6h1V40zM101.20 40V30.6h1V40zM104.30 40V30.6h1V40zM107.40 40V21.2h1V40zM110.49 40V16.4h1V40zM113.59 40V23.5h1V40zM116.69 40V4.3h1V40zM119.79 40V16.5h1V40zM122.89 40V25.9h1V40zM125.99 40V21.2h1V40zM129.09 40V25.9h1V40zM132.19 40V28.2h1V40zM135.29 40V25.9h1V40zM138.38 40V28.2h1V40zM141.48 40V30.6h1V40zM144.58 40V18.8h1V40zM147.68 40V32.9h1V40zM150.78 40V25.9h1V40zM153.88 40V23.5h1V40zM156.98 40V21.2h1V40zM160.08 40V28.2h1V40zM163.18 40V18.8h1V40zM166.27 40V14.1h1V40zM169.37 40V18.8h1V40zM172.47 40V23.5h1V40zM175.57 40V14.1h1V40zM178.67 40V18.8h1V40zM181.77 40V14.1h1V40zM184.87 40V9.3h1V40zM187.97 40V14.1h1V40zM191.07 40V14.1h1V40zM194.16 40V28.2h1V40zM197.26 40V21.2h1V40zM200.36 40V16.5h1V40zM203.46 40V23.5h1V40zM206.56 40V23.5h1V40zM209.66 40V18.8h1V40zM212.76 40V14.1h1V40zM215.86 40V14.1h1V40zM218.96 40V25.9h1V40zM222.05 40V21.2h1V40zM225.15 40V21.2h1V40zM228.25 40V18.8h1V40zM231.35 40V16.5h1V40zM234.45 40V23.5h1V40zM237.55 40V23.5h1V40zM240.65 40V14.1h1V40zM243.75 40V21.2h1V40zM246.85 40V23.5h1V40zM249.95 40V23.5h1V40zM253.04 40V25.9h1V40zM256.14 40V14.1h1V40zM259.24 40V28.2h1V40zM262.34 40V14.1h1V40zM265.44 40V23.5h1V40zM268.54 40V25.9h1V40zM271.64 40V16.5h1V40zM274.74 40V18.8h1V40zM277.84 40V11.7h1V40zM280.93 40V28.2h1V40zM284.03 40V21.2h1V40zM287.13 40V21.2h1V40zM290.23 40V30.6h1V40zM293.33 40V16.5h1V40zM296.43 40V14.1h1V40zM299.53 40V25.9h1V40zM302.63 40V21.2h1V40zM305.73 40V23.5h1V40zM308.82 40V16.4h1V40zM311.92 40V25.9h1V40zM315.02 40V23.5h1V40zM318.12 40V25.9h1V40zM321.22 40V28.2h1V40zM324.32 40V23.5h1V40zM327.42 40V21.2h1V40zM330.52 40V32.9h1V40zM333.62 40V28.2h1V40zM336.71 40V16.5h1V40zM339.81 40V21.2h1V40zM342.91 40V14.1h1V40zM346.01 40V23.5h1V40zM349.11 40V21.2h1V40zM352.21 40V35.3h1V40zM355.31 40V32.9h1V40zM358.41 40V23.5h1V40zM361.51 40V25.9h1V40zM364.60 40V18.8h1V40zM367.70 40V21.2h1V40zM370.80 40V35.3h1V40zM373.90 40V18.8h1V40zM377.00 40V35.3h1V40z"/><path d="M3.07 40V28.2h1V40zM6.16 40V18.8h1V40zM9.26 40V21.2h1V40zM12.36 40V30.6h1V40zM15.46 40V25.9h1V40zM18.56 40V28.2h1V40zM21.66 40V25.9h1V40zM24.76 40V21.2h1V40zM27.86 40V28.2h1V40zM30.96 40V32.9h1V40zM34.05 40V30.6h1V40zM37.15 40V25.9h1V40zM40.25 40V18.8h1V40zM43.35 40V35.3h1V40zM46.45 40V25.9h1V40zM49.55 40V7.8h1V40zM52.65 40V18.8h1V40zM55.75 40V21.2h1V40zM58.85 40V25.9h1V40zM61.95 40V18.8h1V40zM65.04 40V16.5h1V40zM68.14 40V25.9h1V40zM71.24 40V25.9h1V40zM74.34 40V16.5h1V40zM77.44 40V21.2h1V40zM80.54 40V14.1h1V40zM83.64 40V28.2h1V40zM86.74 40V7.8h1V40zM89.84 40V25.9h1V40zM92.93 40V21.2h1V40zM96.03 40V16.5h1V40zM99.13 40V21.2h1V40zM102.23 40V30.6h1V40zM105.33 40V16.5h1V40zM108.43 40V25.9h1V40zM111.53 40V23.5h1V40zM114.63 40V23.5h1V40zM117.73 40V21.2h1V40zM120.82 40V11.8h1V40zM123.92 40V18.8h1V40zM127.02 40V21.2h1V40zM130.12 40V28.2h1V40zM133.22 40V23.5h1V40zM136.32 40V2.4h1V40zM139.42 40V18.8h1V40zM142.52 40V21.2h1V40zM145.62 40V21.2h1V40zM148.71 40V30.6h1V40zM151.81 40V4.3h1V40zM154.91 40V23.5h1V40zM158.01 40V28.2h1V40zM161.11 40V28.2h1V40zM164.21 40V25.9h1V40zM167.31 40V30.6h1V40zM170.41 40V16.5h1V40zM173.51 40V21.2h1V40zM176.60 40V18.8h1V40zM179.70 40V23.5h1V40zM182.80 40V11.8h1V40zM185.90 40V23.5h1V40zM189.00 40V21.2h1V40zM192.10 40V14.1h1V40zM195.20 40V21.2h1V40zM198.30 40V28.2h1V40zM201.40 40V23.5h1V40zM204.49 40V14.1h1V40zM207.59 40V28.2h1V40zM210.69 40V14.1h1V40zM213.79 40V21.2h1V40zM216.89 40V28.2h1V40zM219.99 40V25.9h1V40zM223.09 40V28.2h1V40zM226.19 40V28.2h1V40zM229.29 40V23.5h1V40zM232.38 40V14.1h1V40zM235.48 40V21.2h1V40zM238.58 40V25.9h1V40zM241.68 40V32.9h1V40zM244.78 40V18.8h1V40zM247.88 40V25.9h1V40zM250.98 40V23.5h1V40zM254.08 40V23.5h1V40zM257.18 40V11.8h1V40zM260.27 40V28.2h1V40zM263.37 40V35.3h1V40zM266.47 40V21.2h1V40zM269.57 40V35.3h1V40zM272.67 40V30.6h1V40zM275.77 40V25.9h1V40zM278.87 40V14.1h1V40zM281.97 40V23.5h1V40zM285.07 40V18.8h1V40zM288.16 40V18.8h1V40zM291.26 40V32.9h1V40zM294.36 40V21.2h1V40zM297.46 40V18.8h1V40zM300.56 40V18.8h1V40zM303.66 40V11.8h1V40zM306.76 40V21.2h1V40zM309.86 40V18.8h1V40zM312.96 40V28.2h1V40zM316.05 40V23.5h1V40zM319.15 40V14.1h1V40zM322.25 40V28.2h1V40zM325.35 40V21.2h1V40zM328.45 40V30.6h1V40zM331.55 40V25.9h1V40zM334.65 40V5.0h1V40zM337.75 40V35.3h1V40zM340.85 40V14.1h1V40zM343.95 40V21.2h1V40zM347.04 40V10.0h1V40zM350.14 40V21.2h1V40zM353.24 40V11.7h1V40zM356.34 40V16.5h1V40zM359.44 40V21.2h1V40zM362.54 40V30.6h1V40zM365.64 40V16.5h1V40zM368.74 40V28.2h1V40zM371.84 40V14.1h1V40zM374.93 40V25.9h1V40z"/></g></svg></div><div class="c c5"><span class="tri-r"></span><svg class="ic k" width="14" height="14" viewBox="0 0 14 14"><path fill="#1b981b" transform="translate(.15 -.15)" d="M.5 7.9 1.6 7 4.1 9.9C6.2 6.1 8.9 2.9 12.2.5L12.5.9C9.7 3.700 7.100 7.500 5 11.9L3.900 12.100C3 10.400 1.800 9 .5 7.900z"/></svg><span class="lab p">PASS (2)</span></div></div>
<div class="tr row"><div class="c c1">Linezolid</div><div class="c c2">Limited</div><div class="c c3">2</div><div class="c c4"><svg class="spark" width="380" height="41" viewBox="0 0 380 41" fill="#008080"><g><path d="M16.49 40V26.3h1V40zM25.79 40V26.3h1V40zM28.89 40V26.3h1V40zM78.47 40V26.3h1V40zM137.35 40V13.1h1V40zM233.42 40V26.3h1V40zM248.91 40V26.3h1V40zM261.31 40V26.3h1V40zM298.49 40V26.3h1V40zM326.38 40V26.3h1V40zM366.67 40V26.3h1V40z"/><path d="M45.42 40V26.3h1V40zM64.01 40V26.3h1V40zM107.40 40V26.3h1V40zM135.29 40V26.3h1V40zM141.48 40V26.3h1V40zM172.47 40V26.3h1V40zM200.36 40V26.3h1V40zM212.76 40V26.3h1V40zM237.55 40V26.3h1V40zM243.75 40V13.1h1V40zM246.85 40V26.3h1V40zM333.62 40V26.3h1V40zM346.01 40V26.3h1V40z"/><path d="M9.26 40V26.3h1V40zM12.36 40V26.3h1V40zM37.15 40V26.3h1V40zM92.93 40V26.3h1V40zM123.92 40V26.3h1V40zM148.71 40V26.3h1V40zM207.59 40V26.3h1V40zM235.48 40V26.3h1V40zM319.15 40V26.3h1V40zM328.45 40V26.3h1V40zM331.55 40V26.3h1V40z"/></g><g><path d="M16.49 40V26.3h1V40zM25.79 40V26.3h1V40zM28.89 40V26.3h1V40zM78.47 40V26.3h1V40zM137.35 40V13.1h1V40zM233.42 40V26.3h1V40zM248.91 40V26.3h1V40zM261.31 40V26.3h1V40zM298.49 40V26.3h1V40zM326.38 40V26.3h1V40zM366.67 40V26.3h1V40z"/><path d="M45.42 40V26.3h1V40zM64.01 40V26.3h1V40zM107.40 40V26.3h1V40zM135.29 40V26.3h1V40zM141.48 40V26.3h1V40zM172.47 40V26.3h1V40zM200.36 40V26.3h1V40zM212.76 40V26.3h1V40zM237.55 40V26.3h1V40zM243.75 40V13.1h1V40zM246.85 40V26.3h1V40zM333.62 40V26.3h1V40zM346.01 40V26.3h1V40z"/><path d="M9.26 40V26.3h1V40zM12.36 40V26.3h1V40zM37.15 40V26.3h1V40zM92.93 40V26.3h1V40zM123.92 40V26.3h1V40zM148.71 40V26.3h1V40zM207.59 40V26.3h1V40zM235.48 40V26.3h1V40zM319.15 40V26.3h1V40zM328.45 40V26.3h1V40zM331.55 40V26.3h1V40z"/></g></svg></div><div class="c c5"><span class="tri-r"></span><svg class="ic k" width="14" height="14" viewBox="0 0 14 14"><path fill="#1b981b" transform="translate(.15 -.15)" d="M.5 7.9 1.6 7 4.1 9.9C6.2 6.1 8.9 2.9 12.2.5L12.5.9C9.7 3.700 7.100 7.500 5 11.9L3.900 12.100C3 10.400 1.800 9 .5 7.900z"/></svg><span class="lab p">PASS (2)</span></div></div>
<div class="tr row s"><div class="c c1"></div><div class="c c2"></div><div class="c c3"></div><div class="c c4"></div><div class="c c5"></div></div>
</div>
</body></html>
